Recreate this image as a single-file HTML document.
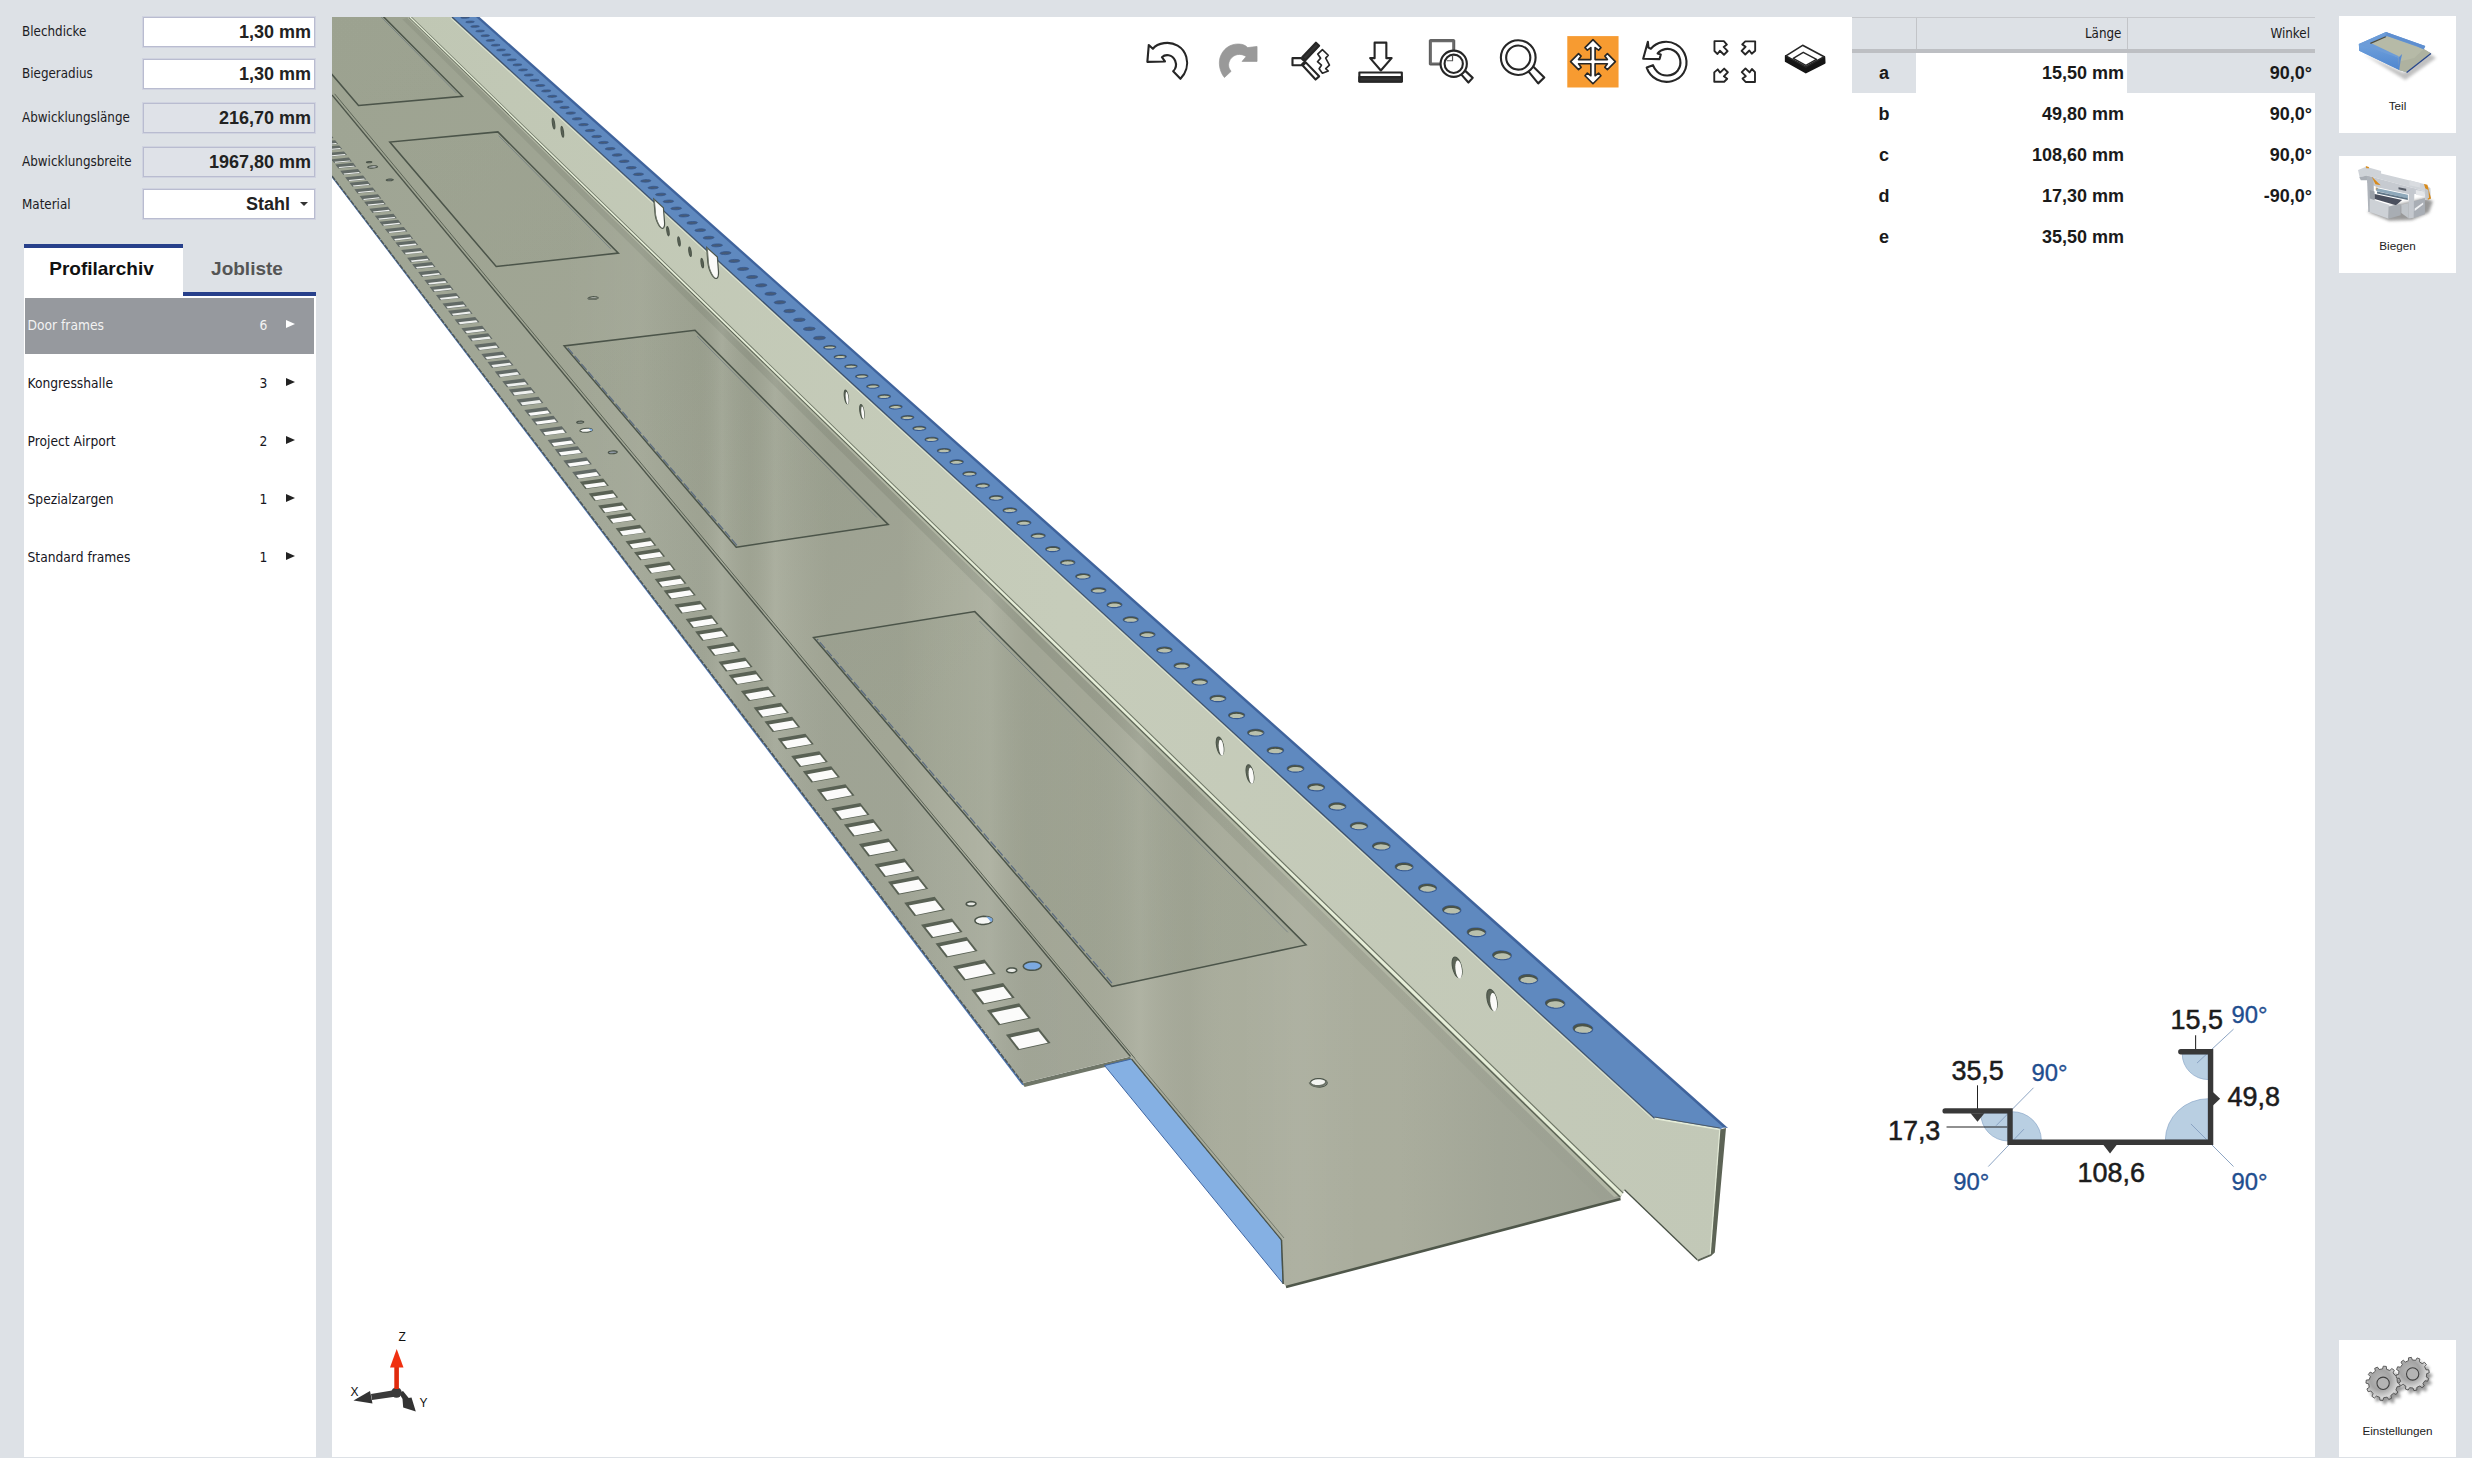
<!DOCTYPE html>
<html lang="de">
<head>
<meta charset="utf-8">
<title>Profil</title>
<style>
html,body{margin:0;padding:0;}
body{width:2472px;height:1458px;overflow:hidden;background:#dde1e6;font-family:"Liberation Sans",sans-serif;color:#1a1a1a;position:relative;}
.abs{position:absolute;}
.lbl{position:absolute;left:22px;font-family:"DejaVu Sans Condensed","Liberation Sans",sans-serif;font-size:13.3px;letter-spacing:0;color:#1c1c24;white-space:nowrap;}
.inp{position:absolute;left:143px;width:170px;height:28px;border:1px solid #b9bcd0;background:#fff;box-shadow:0 0 0 1px #d0d3e0;font-weight:bold;font-size:18px;text-align:right;line-height:28px;color:#222;}
.inp span{position:absolute;right:3px;top:0;}
.inp.ro{background:#dfe2e8;}
#view{position:absolute;left:332px;top:17px;width:1983px;height:1441px;background:#fff;overflow:hidden;}
#leftlist{position:absolute;left:23.5px;top:296px;width:292.5px;height:1162px;background:#fff;}
.tab{position:absolute;font-weight:bold;font-size:19px;text-align:center;white-space:nowrap;}
.row{position:absolute;left:0;width:291px;height:58px;font-family:"DejaVu Sans Condensed","Liberation Sans",sans-serif;font-size:13.7px;letter-spacing:0;color:#16161e;}
.row .n{position:absolute;left:4px;top:21px;}
.row .c{position:absolute;left:236px;top:21px;}
.row .a{position:absolute;left:262px;top:24px;width:0;height:0;border-left:9px solid #222;border-top:4.5px solid transparent;border-bottom:4.5px solid transparent;}
.row.sel{background:#96999e;color:#f2f2f2;left:1px;width:289px;top:2px;height:56px;}
.row.sel .a{border-left-color:#fff;}
.rbtn{position:absolute;left:2339px;width:117px;background:#fff;}
.rbtn .t{position:absolute;left:0;width:117px;text-align:center;font-size:11.7px;color:#222;}
table.tb{position:absolute;left:1852px;top:17px;border-collapse:collapse;table-layout:fixed;width:463px;}
.tb td{height:41px;padding:0;font-weight:bold;font-size:18px;text-align:right;color:#1a1a1a;}
.tb th{height:31px;background:#dde1e6;font-weight:normal;font-family:"DejaVu Sans Condensed","Liberation Sans",sans-serif;font-size:13.3px;text-align:right;letter-spacing:0;border-top:1px solid #c6c8cc;border-bottom:4px solid #bdbfc3;border-left:1px solid #c2c4c8;padding:0 5px 0 0;}
.tb td.k{text-align:center;}
.tb td.v{padding-right:3px;}
.tb td.w{padding-right:3px;}
.tb tr.s td.k,.tb tr.s td.w{background:linear-gradient(#dde1e6,#dde1e6) no-repeat;background-size:100% 40px;}
</style>
</head>
<body>
<!-- left form -->
<div class="lbl" style="top:24px">Blechdicke</div>
<div class="lbl" style="top:66px">Biegeradius</div>
<div class="lbl" style="top:110px">Abwicklungslänge</div>
<div class="lbl" style="top:154px">Abwicklungsbreite</div>
<div class="lbl" style="top:197px">Material</div>
<div class="inp" style="top:17px"><span>1,30 mm</span></div>
<div class="inp" style="top:59px"><span>1,30 mm</span></div>
<div class="inp ro" style="top:103px"><span>216,70 mm</span></div>
<div class="inp ro" style="top:147px"><span>1967,80 mm</span></div>
<div class="inp" style="top:189px"><span style="right:24px">Stahl</span><i style="position:absolute;right:6px;top:12px;width:0;height:0;border-top:4px solid #333;border-left:4px solid transparent;border-right:4px solid transparent"></i></div>
<!-- tabs -->
<div class="abs" style="left:24px;top:244px;width:159px;height:52px;background:#fff;border-top:4px solid #27408b;box-sizing:border-box"></div>
<div class="abs" style="left:183px;top:292px;width:133px;height:4px;background:#27408b"></div>
<div class="tab" style="left:24px;top:258px;width:155px;color:#111">Profilarchiv</div>
<div class="tab" style="left:183px;top:258px;width:128px;color:#555">Jobliste</div>
<div id="leftlist">
<div class="row sel"><span class="n" style="top:19px;left:3px">Door frames</span><span class="c" style="top:19px;left:235px">6</span><i class="a" style="top:22px;left:261px"></i></div>
<div class="row" style="top:58px"><span class="n">Kongresshalle</span><span class="c">3</span><i class="a"></i></div>
<div class="row" style="top:116px"><span class="n">Project Airport</span><span class="c">2</span><i class="a"></i></div>
<div class="row" style="top:174px"><span class="n">Spezialzargen</span><span class="c">1</span><i class="a"></i></div>
<div class="row" style="top:232px"><span class="n">Standard frames</span><span class="c">1</span><i class="a"></i></div>
</div>
<!-- viewport -->
<div id="view">
<svg width="1983" height="1441" viewBox="332 17 1983 1441" style="position:absolute;left:0;top:0"><defs>
<linearGradient id="gc" gradientUnits="userSpaceOnUse" x1="332" y1="17" x2="1450" y2="1240"><stop offset="0" stop-color="#9da391"/><stop offset="0.3" stop-color="#a1a695"/><stop offset="0.55" stop-color="#a9ad9c"/><stop offset="1" stop-color="#aaad9d"/></linearGradient>
<linearGradient id="gdark" gradientUnits="userSpaceOnUse" x1="1400" y1="0" x2="1640" y2="0"><stop offset="0" stop-color="#90968a" stop-opacity="0"/><stop offset="0.4" stop-color="#90968a" stop-opacity="0.3"/><stop offset="1" stop-color="#8c9286" stop-opacity="0.5"/></linearGradient>
<linearGradient id="gband" gradientUnits="userSpaceOnUse" x1="400" y1="17" x2="1620" y2="1195"><stop offset="0" stop-color="#868c7c" stop-opacity="0.4"/><stop offset="0.6" stop-color="#868c7c" stop-opacity="0.4"/><stop offset="1" stop-color="#868c7c" stop-opacity="0.05"/></linearGradient>
<linearGradient id="grect" gradientUnits="userSpaceOnUse" x1="332" y1="17" x2="1300" y2="1000"><stop offset="0" stop-color="#8d9482" stop-opacity="0.05"/><stop offset="0.35" stop-color="#8d9482" stop-opacity="0.18"/><stop offset="1" stop-color="#8d9482" stop-opacity="0.32"/></linearGradient>
<linearGradient id="ge" gradientUnits="userSpaceOnUse" x1="332" y1="0" x2="1130" y2="0"><stop offset="0" stop-color="#9fa594"/><stop offset="0.5" stop-color="#a3a898"/><stop offset="1" stop-color="#a6aa9b"/></linearGradient>
<linearGradient id="gb" gradientUnits="userSpaceOnUse" x1="400" y1="0" x2="1730" y2="0"><stop offset="0" stop-color="#c0c7b4"/><stop offset="0.5" stop-color="#c6ccba"/><stop offset="1" stop-color="#c2c8b7"/></linearGradient>
<clipPath id="cpc"><polygon points="332.0,17.0 410.0,17.0 1621.5,1195.0 1620.0,1199.0 1290.0,1286.5 1286.0,1286.0 1283.0,1283.0 1281.5,1240.0 332.0,95.0"/></clipPath>
<linearGradient id="gv" gradientUnits="userSpaceOnUse" x1="560" y1="0" x2="1360" y2="0"><stop offset="0.0000" stop-color="#fff" stop-opacity="0"/><stop offset="0.1000" stop-color="#fff" stop-opacity="0.07"/><stop offset="0.1750" stop-color="#000" stop-opacity="0.05"/><stop offset="0.2025" stop-color="#fff" stop-opacity="0.11"/><stop offset="0.2375" stop-color="#000" stop-opacity="0.06"/><stop offset="0.2687" stop-color="#fff" stop-opacity="0.11"/><stop offset="0.3375" stop-color="#000" stop-opacity="0.07"/><stop offset="0.4250" stop-color="#000" stop-opacity="0.07"/><stop offset="0.5000" stop-color="#fff" stop-opacity="0.05"/><stop offset="0.5375" stop-color="#fff" stop-opacity="0.13"/><stop offset="0.5875" stop-color="#000" stop-opacity="0.07"/><stop offset="0.6625" stop-color="#000" stop-opacity="0.05"/><stop offset="0.7250" stop-color="#fff" stop-opacity="0.11"/><stop offset="0.7875" stop-color="#000" stop-opacity="0.05"/><stop offset="0.8500" stop-color="#fff" stop-opacity="0"/><stop offset="0.9250" stop-color="#fff" stop-opacity="0.09"/><stop offset="1.0000" stop-color="#fff" stop-opacity="0"/></linearGradient>
<clipPath id="cpe"><polygon points="332.0,95.0 1130.5,1056.5 1023.0,1083.0 332.0,176.0"/></clipPath>
</defs>
<polygon points="331.0,176.5 1022.0,1084.8 1025.0,1086.0 1023.0,1083.0 332.0,175.0" fill="#4d74ad"/>
<polygon points="1023.0,1083.0 1130.5,1056.5 1131.5,1060.5 1024.5,1087.0" fill="#6f7668"/>
<polygon points="332.0,95.0 1130.5,1056.5 1023.0,1083.0 332.0,176.0" fill="url(#ge)"/>
<rect clip-path="url(#cpe)" x="560" y="17" width="800" height="1300" fill="url(#gv)" opacity="0.45"/>
<polygon points="1104.5,1065.5 1131.5,1059.0 1281.5,1240.0 1283.0,1283.5" fill="#85b0e3" stroke="#3f66a3" stroke-width="1"/>
<polygon points="332.0,17.0 410.0,17.0 1621.5,1195.0 1620.0,1199.0 1290.0,1286.5 1286.0,1286.0 1283.0,1283.0 1281.5,1240.0 332.0,95.0" fill="url(#gc)"/>
<polygon points="410.0,17.0 1621.5,1195.0 1601.4,1200.5 402.2,19.3" fill="url(#gband)"/>
<polygon clip-path="url(#cpc)" points="1400.0,900.0 1640.0,900.0 1640.0,1300.0 1400.0,1300.0" fill="url(#gdark)"/>
<rect clip-path="url(#cpc)" x="560" y="17" width="800" height="1300" fill="url(#gv)" opacity="0.6"/>
<polygon points="410.0,17.0 1621.5,1195.0 1614.1,1197.0 407.3,17.8" fill="#b6bca9" opacity="0.8"/>
<polygon points="410.0,17.0 452.0,17.0 1654.6,1118.4 1719.8,1129.4 1710.2,1254.2 1697.2,1259.7 1624.5,1189.7 1621.5,1195.0" fill="url(#gb)"/>
<polygon points="1719.8,1129.4 1726.0,1128.0 1714.8,1252.5 1711.0,1256.0 1698.0,1261.5 1697.2,1259.7 1710.2,1254.2" fill="#5d6456"/>
<polygon points="452.0,17.0 477.0,17.0 1724.6,1127.0 1719.8,1129.4 1654.6,1118.4" fill="#5f89bf"/>
<polygon points="476.0,17.0 479.5,17.0 1728.0,1128.0 1723.5,1127.5" fill="#3f639c"/>
<polygon points="409.5,17.5 409.0,18.1 1619.3,1197.3 1620.3,1196.2" fill="#5b6354"/>
<polygon points="410.4,16.6 409.6,17.4 1620.6,1195.9 1622.8,1193.6" fill="#e6eed8"/>
<polygon points="410.9,16.0 410.5,16.5 1622.9,1193.5 1623.7,1192.7" fill="#6b7363"/>
<line x1="332.0" y1="95.0" x2="1130.5" y2="1056.5" stroke="#4c5449" stroke-width="1.4" />
<line x1="334.6" y1="93.8" x2="1135.0" y2="1058.5" stroke="#5d6558" stroke-width="1.0" />
<line x1="1131.5" y1="1059.0" x2="1281.5" y2="1240.0" stroke="#4c5449" stroke-width="1.2" />
<line x1="1134.5" y1="1058.5" x2="1284.0" y2="1238.0" stroke="#6d7467" stroke-width="0.9" />
<line x1="452.0" y1="17.0" x2="1654.6" y2="1118.4" stroke="#3b4f6b" stroke-width="1.2" />
<line x1="450.8" y1="18.1" x2="1653.4" y2="1119.5" stroke="#e0e7d3" stroke-width="1.0" />
<line x1="1654.6" y1="1118.4" x2="1719.8" y2="1129.4" stroke="#e4ebd6" stroke-width="1.6" />
<line x1="1654.6" y1="1117.0" x2="1719.8" y2="1128.0" stroke="#4d5a66" stroke-width="1.0" />
<line x1="1286.0" y1="1287.0" x2="1620.5" y2="1199.0" stroke="#4f574a" stroke-width="2.6" />
<line x1="1281.5" y1="1240.0" x2="1283.2" y2="1284.0" stroke="#4a5247" stroke-width="1.5" />
<line x1="1697.2" y1="1259.7" x2="1624.5" y2="1189.7" stroke="#4a5247" stroke-width="1.3" />
<line x1="1719.8" y1="1129.4" x2="1710.2" y2="1254.2" stroke="#e2e9d6" stroke-width="1.2" />
<line x1="332.0" y1="176.0" x2="1023.0" y2="1083.0" stroke="#4d5658" stroke-width="1.4" stroke-dasharray="5 1.2"/>
<polygon points="1111.8,986.5 1306.1,944.9 974.8,611.6 813.5,637.6" fill="url(#grect)" stroke="#4b5449" stroke-width="1.5" stroke-linejoin="miter"/>
<line x1="1111.9" y1="983.1" x2="817.2" y2="639.1" stroke="#45597a" stroke-width="1.3" stroke-dasharray="8 2.5" opacity="0.7"/>
<line x1="1287.8" y1="932.3" x2="979.4" y2="621.0" stroke="#5a6a7a" stroke-width="0.8" opacity="0.6"/>
<polygon points="736.2,547.2 888.3,524.6 695.0,330.2 564.1,345.9" fill="url(#grect)" stroke="#4b5449" stroke-width="1.5" stroke-linejoin="miter"/>
<line x1="736.9" y1="545.3" x2="566.8" y2="346.8" stroke="#45597a" stroke-width="1.3" stroke-dasharray="8 2.5" opacity="0.7"/>
<line x1="877.0" y1="517.6" x2="697.1" y2="336.0" stroke="#5a6a7a" stroke-width="0.8" opacity="0.6"/>
<polygon points="496.2,266.5 618.4,253.1 497.9,131.9 389.8,142.0" fill="url(#grect)" stroke="#4b5449" stroke-width="1.5" stroke-linejoin="miter"/>
<line x1="610.8" y1="248.9" x2="498.7" y2="135.7" stroke="#5a6a7a" stroke-width="0.8" opacity="0.6"/>
<polygon points="358.5,105.5 462.5,96.3 375.6,8.8 282.0,16.0" fill="url(#grect)" stroke="#4b5449" stroke-width="1.5" stroke-linejoin="miter"/>
<line x1="456.7" y1="93.3" x2="375.8" y2="11.6" stroke="#5a6a7a" stroke-width="0.8" opacity="0.6"/>
<polygon points="1315.2,1078.9 1317.7,1078.6 1320.3,1078.7 1322.8,1079.1 1324.8,1080.0 1326.3,1081.1 1327.1,1082.4 1327.0,1083.7 1326.1,1084.9 1324.5,1086.0 1322.4,1086.7 1319.9,1087.1 1317.2,1087.0 1314.8,1086.5 1312.7,1085.7 1311.2,1084.6 1310.5,1083.3 1310.6,1082.0 1311.4,1080.7 1313.0,1079.7" fill="#f4f5f2" stroke="#4b5449" stroke-width="1.2"/>
<polyline points="1325.7,1080.6 1326.1,1081.7 1325.8,1082.9 1324.9,1084.0 1323.5,1084.9 1321.6,1085.5 1319.5,1085.9 1317.2,1086.0 1314.9,1085.7 1312.9,1085.1 1311.2,1084.3 1310.1,1083.3 1309.5,1082.2" fill="none" stroke="#6a7166" stroke-width="2"/>
<polygon points="592.1,296.9 593.6,296.7 595.0,296.8 596.3,296.9 597.3,297.2 597.9,297.5 598.0,297.9 597.6,298.4 596.9,298.8 595.7,299.1 594.3,299.3 592.8,299.4 591.4,299.4 590.1,299.2 589.1,299.0 588.5,298.6 588.4,298.2 588.8,297.8 589.6,297.4 590.7,297.1" fill="#f4f5f2" stroke="#4b5449" stroke-width="1.2"/>
<polyline points="597.7,297.4 597.6,297.8 597.2,298.1 596.4,298.4 595.4,298.7 594.2,298.9 592.9,299.0 591.6,299.1 590.4,299.0 589.4,298.8 588.6,298.5 588.2,298.2 588.1,297.9" fill="none" stroke="#6a7166" stroke-width="2"/>
<polygon points="1017.9,1050.3 1050.6,1043.1 1038.4,1027.7 1005.9,1034.7" fill="#596154"/>
<polygon points="1019.4,1049.0 1047.7,1042.7 1038.6,1031.3 1010.5,1037.4" fill="#fbfbfa"/>
<polygon points="998.6,1025.3 1031.0,1018.3 1019.1,1003.3 986.9,1010.2" fill="#596154"/>
<polygon points="1000.2,1024.0 1028.1,1017.9 1019.4,1006.9 991.6,1012.8" fill="#fbfbfa"/>
<polygon points="982.6,1004.6 1014.7,997.8 1003.1,983.1 971.2,989.8" fill="#596154"/>
<polygon points="984.2,1003.3 1011.9,997.4 1003.4,986.7 975.9,992.5" fill="#fbfbfa"/>
<polygon points="964.1,980.5 995.8,973.9 984.5,959.6 953.0,966.2" fill="#596154"/>
<polygon points="965.6,979.3 993.0,973.6 984.9,963.3 957.6,968.9" fill="#fbfbfa"/>
<polygon points="946.3,957.4 977.6,951.0 966.6,937.1 935.5,943.5" fill="#596154"/>
<polygon points="947.8,956.2 974.9,950.7 967.1,940.8 940.1,946.3" fill="#fbfbfa"/>
<polygon points="931.6,938.3 962.6,932.0 951.9,918.5 921.0,924.7" fill="#596154"/>
<polygon points="933.1,937.1 959.9,931.7 952.3,922.1 925.6,927.5" fill="#fbfbfa"/>
<polygon points="914.4,916.1 945.1,909.9 934.7,896.8 904.2,902.8" fill="#596154"/>
<polygon points="916.0,914.9 942.4,909.6 935.1,900.4 908.8,905.6" fill="#fbfbfa"/>
<polygon points="898.0,894.7 928.3,888.7 918.1,875.9 888.0,881.8" fill="#596154"/>
<polygon points="899.5,893.6 925.7,888.4 918.6,879.5 892.6,884.6" fill="#fbfbfa"/>
<polygon points="884.3,877.0 914.4,871.2 904.4,858.6 874.5,864.3" fill="#596154"/>
<polygon points="885.8,875.9 911.8,870.9 904.9,862.2 879.1,867.2" fill="#fbfbfa"/>
<polygon points="868.4,856.4 898.1,850.7 888.4,838.4 858.9,844.0" fill="#596154"/>
<polygon points="869.9,855.3 895.6,850.4 889.0,842.1 863.5,846.9" fill="#fbfbfa"/>
<polygon points="853.1,836.5 882.5,831.0 873.1,819.1 843.9,824.5" fill="#596154"/>
<polygon points="854.6,835.5 880.0,830.7 873.7,822.7 848.4,827.4" fill="#fbfbfa"/>
<polygon points="840.4,820.1 869.6,814.7 860.3,803.0 831.4,808.3" fill="#596154"/>
<polygon points="841.9,819.0 867.1,814.4 860.9,806.6 835.9,811.2" fill="#fbfbfa"/>
<polygon points="825.7,800.9 854.5,795.6 845.5,784.2 816.8,789.4" fill="#596154"/>
<polygon points="827.1,799.9 852.0,795.3 846.1,787.8 821.3,792.3" fill="#fbfbfa"/>
<polygon points="811.4,782.4 840.0,777.3 831.2,766.2 802.8,771.2" fill="#596154"/>
<polygon points="812.9,781.4 837.6,777.0 831.8,769.8 807.3,774.2" fill="#fbfbfa"/>
<polygon points="799.6,767.1 827.9,762.1 819.3,751.2 791.2,756.1" fill="#596154"/>
<polygon points="801.1,766.1 825.5,761.8 820.0,754.8 795.6,759.1" fill="#fbfbfa"/>
<polygon points="785.8,749.2 813.8,744.3 805.4,733.7 777.6,738.5" fill="#596154"/>
<polygon points="787.3,748.3 811.5,744.0 806.1,737.3 782.0,741.5" fill="#fbfbfa"/>
<polygon points="772.6,732.0 800.3,727.2 792.1,716.8 764.5,721.5" fill="#596154"/>
<polygon points="774.0,731.1 797.9,726.9 792.8,720.4 768.9,724.5" fill="#fbfbfa"/>
<polygon points="761.5,717.7 789.0,713.0 780.9,702.8 753.6,707.4" fill="#596154"/>
<polygon points="763.0,716.8 786.7,712.7 781.7,706.4 758.1,710.4" fill="#fbfbfa"/>
<polygon points="748.7,700.9 775.9,696.4 768.0,686.4 740.9,690.9" fill="#596154"/>
<polygon points="750.1,700.1 773.6,696.1 768.7,690.0 745.3,693.9" fill="#fbfbfa"/>
<polygon points="736.2,684.8 763.2,680.4 755.5,670.6 728.7,675.0" fill="#596154"/>
<polygon points="737.7,684.0 760.9,680.1 756.3,674.2 733.1,678.1" fill="#fbfbfa"/>
<polygon points="725.9,671.4 752.6,667.0 745.1,657.5 718.5,661.8" fill="#596154"/>
<polygon points="727.3,670.6 750.4,666.8 745.9,661.1 722.9,664.8" fill="#fbfbfa"/>
<polygon points="713.9,655.8 740.3,651.5 732.9,642.2 706.6,646.4" fill="#596154"/>
<polygon points="715.3,655.0 738.1,651.3 733.7,645.8 711.0,649.4" fill="#fbfbfa"/>
<polygon points="702.2,640.7 728.4,636.5 721.2,627.4 695.1,631.5" fill="#596154"/>
<polygon points="703.6,639.9 726.2,636.3 722.0,630.9 699.5,634.5" fill="#fbfbfa"/>
<polygon points="692.5,628.1 718.5,624.0 711.4,615.1 685.6,619.1" fill="#596154"/>
<polygon points="693.9,627.3 716.4,623.8 712.3,618.6 689.9,622.1" fill="#fbfbfa"/>
<polygon points="681.2,613.4 707.0,609.4 700.0,600.7 674.4,604.6" fill="#596154"/>
<polygon points="682.6,612.7 704.8,609.2 700.9,604.2 678.7,607.6" fill="#fbfbfa"/>
<polygon points="670.3,599.2 695.8,595.3 689.0,586.8 663.6,590.6" fill="#596154"/>
<polygon points="671.7,598.5 693.7,595.1 689.9,590.3 667.9,593.6" fill="#fbfbfa"/>
<polygon points="661.2,587.4 686.5,583.6 679.8,575.2 654.7,579.0" fill="#596154"/>
<polygon points="662.6,586.7 684.4,583.4 680.7,578.7 658.9,582.0" fill="#fbfbfa"/>
<polygon points="650.5,573.6 675.6,569.9 669.1,561.6 644.2,565.3" fill="#596154"/>
<polygon points="651.9,572.9 673.5,569.7 670.0,565.1 648.4,568.4" fill="#fbfbfa"/>
<polygon points="640.3,560.3 665.1,556.6 658.7,548.5 634.0,552.2" fill="#596154"/>
<polygon points="641.6,559.6 663.1,556.4 659.6,552.0 638.2,555.2" fill="#fbfbfa"/>
<polygon points="631.7,549.1 656.3,545.5 650.0,537.6 625.5,541.2" fill="#596154"/>
<polygon points="633.0,548.5 654.3,545.3 651.0,541.1 629.7,544.2" fill="#fbfbfa"/>
<polygon points="621.7,536.1 646.1,532.6 639.9,524.8 615.6,528.3" fill="#596154"/>
<polygon points="623.0,535.5 644.1,532.4 640.8,528.3 619.8,531.3" fill="#fbfbfa"/>
<polygon points="612.0,523.6 636.2,520.1 630.1,512.5 606.1,515.9" fill="#596154"/>
<polygon points="613.3,522.9 634.2,519.9 631.1,516.0 610.2,518.9" fill="#fbfbfa"/>
<polygon points="603.9,513.1 627.9,509.7 622.0,502.2 598.1,505.5" fill="#596154"/>
<polygon points="605.2,512.4 625.9,509.5 622.9,505.6 602.2,508.6" fill="#fbfbfa"/>
<polygon points="594.4,500.8 618.2,497.5 612.4,490.1 588.7,493.4" fill="#596154"/>
<polygon points="595.7,500.2 616.3,497.3 613.4,493.6 592.9,496.4" fill="#fbfbfa"/>
<polygon points="585.3,488.9 608.9,485.7 603.2,478.5 579.7,481.7" fill="#596154"/>
<polygon points="586.6,488.3 607.0,485.5 604.1,481.9 583.8,484.7" fill="#fbfbfa"/>
<polygon points="577.6,479.0 601.1,475.8 595.5,468.7 572.2,471.9" fill="#626a66"/>
<polygon points="578.9,478.4 599.2,475.6 596.4,472.1 576.2,474.9" fill="#fbfbfa"/>
<polygon points="568.7,467.4 591.9,464.3 586.4,457.3 563.3,460.4" fill="#626a66"/>
<polygon points="570.0,466.8 590.0,464.1 587.4,460.7 567.4,463.4" fill="#fbfbfa"/>
<polygon points="560.0,456.2 583.1,453.1 577.7,446.3 554.8,449.3" fill="#626a66"/>
<polygon points="561.3,455.6 581.2,452.9 578.6,449.7 558.8,452.3" fill="#fbfbfa"/>
<polygon points="552.8,446.8 575.7,443.8 570.4,437.1 547.6,440.0" fill="#626a66"/>
<polygon points="554.1,446.2 573.8,443.6 571.3,440.4 551.6,443.0" fill="#fbfbfa"/>
<polygon points="544.3,435.8 567.0,432.8 561.8,426.3 539.3,429.2" fill="#626a66"/>
<polygon points="545.6,435.2 565.2,432.7 562.8,429.6 543.3,432.2" fill="#fbfbfa"/>
<polygon points="536.2,425.2 558.6,422.2 553.5,415.8 531.2,418.7" fill="#626a66"/>
<polygon points="537.4,424.6 556.8,422.1 554.5,419.2 535.1,421.7" fill="#fbfbfa"/>
<polygon points="529.3,416.3 551.6,413.4 546.6,407.1 524.4,409.9" fill="#626a66"/>
<polygon points="530.6,415.7 549.8,413.2 547.6,410.4 528.3,412.9" fill="#fbfbfa"/>
<polygon points="521.3,405.9 543.4,403.0 538.5,396.8 516.4,399.6" fill="#626a66"/>
<polygon points="522.5,405.3 541.6,402.9 539.5,400.1 520.4,402.6" fill="#eef0ee"/>
<polygon points="513.5,395.8 535.5,393.0 530.6,386.9 508.8,389.6" fill="#626a66"/>
<polygon points="514.7,395.2 533.7,392.9 531.6,390.2 512.7,392.6" fill="#eef0ee"/>
<polygon points="507.0,387.3 528.8,384.6 524.0,378.6 502.3,381.3" fill="#626a66"/>
<polygon points="508.2,386.8 527.1,384.5 525.0,381.9 506.2,384.2" fill="#eef0ee"/>
<polygon points="499.4,377.4 521.0,374.8 516.3,368.8 494.8,371.5" fill="#626a66"/>
<polygon points="500.6,376.9 519.3,374.6 517.3,372.1 498.7,374.4" fill="#eef0ee"/>
<polygon points="492.0,367.9 513.5,365.2 508.8,359.4 487.5,362.0" fill="#626a66"/>
<polygon points="493.2,367.4 511.7,365.1 509.8,362.7 491.4,364.9" fill="#eef0ee"/>
<polygon points="485.8,359.8 507.1,357.3 502.6,351.5 481.4,354.1" fill="#626a66"/>
<polygon points="487.0,359.3 505.4,357.1 503.6,354.8 485.2,357.0" fill="#eef0ee"/>
<polygon points="478.6,350.4 499.7,347.9 495.3,342.3 474.2,344.8" fill="#626a66"/>
<polygon points="479.8,349.9 498.0,347.8 496.3,345.5 478.0,347.7" fill="#eef0ee"/>
<polygon points="471.5,341.3 492.5,338.8 488.1,333.3 467.3,335.8" fill="#626a66"/>
<polygon points="472.7,340.8 490.9,338.7 489.2,336.5 471.1,338.7" fill="#eef0ee"/>
<polygon points="465.7,333.7 486.5,331.2 482.2,325.8 461.4,328.2" fill="#626a66"/>
<polygon points="466.9,333.2 484.9,331.1 483.2,329.0 465.2,331.1" fill="#eef0ee"/>
<polygon points="458.8,324.7 479.5,322.3 475.2,317.0 454.6,319.4" fill="#626a66"/>
<polygon points="460.0,324.3 477.8,322.2 476.2,320.2 458.4,322.3" fill="#eef0ee"/>
<polygon points="452.1,316.1 472.6,313.7 468.4,308.4 448.0,310.8" fill="#626a66"/>
<polygon points="453.3,315.6 471.0,313.6 469.5,311.6 451.8,313.7" fill="#eef0ee"/>
<polygon points="446.5,308.8 466.9,306.5 462.8,301.3 442.5,303.6" fill="#626a66"/>
<polygon points="447.7,308.3 465.3,306.3 463.8,304.5 446.2,306.5" fill="#eef0ee"/>
<polygon points="439.9,300.3 460.2,298.0 456.1,292.9 436.0,295.1" fill="#626a66"/>
<polygon points="441.1,299.8 458.6,297.9 457.1,296.0 439.7,298.0" fill="#eef0ee"/>
<polygon points="433.5,292.0 453.6,289.7 449.7,284.7 429.6,286.9" fill="#626a66"/>
<polygon points="434.7,291.6 452.1,289.6 450.7,287.9 433.3,289.8" fill="#eef0ee"/>
<polygon points="428.2,285.1 448.2,282.8 444.2,277.9 424.4,280.1" fill="#626a66"/>
<polygon points="429.4,284.6 446.6,282.7 445.3,281.0 428.0,282.9" fill="#eef0ee"/>
<polygon points="421.9,276.9 441.8,274.7 437.9,269.9 418.2,272.0" fill="#626a66"/>
<polygon points="423.1,276.5 440.2,274.6 438.9,273.0 421.8,274.9" fill="#eef0ee"/>
<polygon points="415.8,269.0 435.5,266.9 431.7,262.1 412.1,264.2" fill="#626a66"/>
<polygon points="417.0,268.6 434.0,266.8 432.7,265.2 415.8,267.0" fill="#eef0ee"/>
<polygon points="410.7,262.4 430.3,260.3 426.6,255.6 407.1,257.7" fill="#626a66"/>
<polygon points="411.9,262.0 428.8,260.2 427.6,258.7 410.7,260.5" fill="#eef0ee"/>
<polygon points="404.8,254.6 424.2,252.6 420.5,247.9 401.1,250.0" fill="#626a66"/>
<polygon points="405.9,254.2 422.7,252.4 421.5,251.0 404.8,252.8" fill="#eef0ee"/>
<polygon points="398.9,247.1 418.2,245.1 414.6,240.5 395.4,242.5" fill="#626a66"/>
<polygon points="400.1,246.7 416.7,244.9 415.6,243.5 399.0,245.3" fill="#eef0ee"/>
<polygon points="394.1,240.8 413.2,238.8 409.6,234.2 390.6,236.2" fill="#626a66"/>
<polygon points="395.2,240.4 411.7,238.6 410.7,237.3 394.1,239.0" fill="#eef0ee"/>
<polygon points="388.3,233.3 407.4,231.4 403.8,226.9 384.9,228.9" fill="#626a66"/>
<polygon points="389.5,233.0 405.9,231.3 404.9,230.0 388.5,231.7" fill="#eef0ee"/>
<polygon points="382.8,226.1 401.7,224.2 398.2,219.8 379.4,221.7" fill="#626a66"/>
<polygon points="383.9,225.7 400.2,224.1 399.2,222.8 382.9,224.5" fill="#eef0ee"/>
<polygon points="378.1,220.1 396.9,218.2 393.5,213.8 374.8,215.7" fill="#626a66"/>
<polygon points="379.2,219.7 395.4,218.0 394.5,216.9 378.3,218.5" fill="#eef0ee"/>
<polygon points="372.6,213.0 391.3,211.1 387.9,206.8 369.3,208.7" fill="#626a66"/>
<polygon points="373.7,212.6 389.8,211.0 388.9,209.8 372.9,211.5" fill="#eef0ee"/>
<polygon points="367.3,206.1 385.8,204.2 382.5,200.0 364.1,201.8" fill="#626a66"/>
<polygon points="368.4,205.7 384.4,204.1 383.5,203.0 367.6,204.6" fill="#eef0ee"/>
<polygon points="362.9,200.3 381.3,198.4 378.0,194.3 359.6,196.1" fill="#626a66"/>
<polygon points="363.9,199.9 379.8,198.3 379.0,197.3 363.1,198.9" fill="#eef0ee"/>
<polygon points="357.6,193.5 375.9,191.6 372.7,187.6 354.4,189.3" fill="#626a66"/>
<polygon points="358.7,193.1 374.5,191.5 373.7,190.5 357.9,192.1" fill="#eef0ee"/>
<polygon points="352.5,186.8 370.7,185.1 367.5,181.0 349.4,182.8" fill="#626a66"/>
<polygon points="353.6,186.5 369.3,185.0 368.5,184.0 352.8,185.5" fill="#eef0ee"/>
<polygon points="348.2,181.3 366.3,179.5 363.1,175.5 345.1,177.3" fill="#626a66"/>
<polygon points="349.3,180.9 364.9,179.4 364.1,178.5 348.6,180.0" fill="#eef0ee"/>
<polygon points="343.2,174.7 361.1,173.0 358.0,169.1 340.2,170.8" fill="#626a66"/>
<polygon points="344.3,174.4 359.7,172.9 359.0,172.0 343.5,173.5" fill="#eef0ee"/>
<polygon points="338.3,168.4 356.1,166.7 353.1,162.8 335.3,164.5" fill="#626a66"/>
<polygon points="339.4,168.1 354.7,166.6 354.0,165.7 338.6,167.1" fill="#eef0ee"/>
<polygon points="334.2,163.1 351.9,161.4 348.9,157.6 331.2,159.2" fill="#626a66"/>
<polygon points="335.2,162.7 350.6,161.3 349.8,160.4 334.5,161.8" fill="#eef0ee"/>
<polygon points="329.4,156.8 347.0,155.1 344.0,151.4 326.5,153.0" fill="#626a66"/>
<polygon points="330.4,156.5 345.6,155.1 344.9,154.1 329.7,155.6" fill="#eef0ee"/>
<polygon points="324.7,150.7 342.2,149.1 339.2,145.4 321.8,147.0" fill="#626a66"/>
<polygon points="325.7,150.4 340.8,149.0 340.1,148.1 325.0,149.5" fill="#eef0ee"/>
<polygon points="320.7,145.6 338.1,144.0 335.2,140.3 317.9,141.9" fill="#626a66"/>
<polygon points="321.8,145.3 336.8,143.9 336.1,143.0 321.1,144.4" fill="#eef0ee"/>
<polygon points="316.1,139.6 333.4,138.0 330.5,134.4 313.3,135.9" fill="#626a66"/>
<polygon points="317.1,139.3 332.0,137.9 331.4,137.0 316.4,138.4" fill="#eef0ee"/>
<polygon points="1029.1,962.0 1031.9,961.7 1034.7,961.8 1037.3,962.2 1039.4,963.1 1040.8,964.2 1041.4,965.5 1041.1,966.8 1039.9,968.1 1038.0,969.2 1035.6,969.9 1032.8,970.3 1030.0,970.2 1027.4,969.7 1025.3,968.9 1023.9,967.7 1023.3,966.4 1023.6,965.1 1024.8,963.8 1026.7,962.8" fill="#7ca9e0" stroke="#4b5449" stroke-width="1.5"/>
<polygon points="1009.9,968.1 1011.5,967.9 1013.0,967.9 1014.5,968.2 1015.6,968.7 1016.4,969.3 1016.7,970.0 1016.6,970.8 1015.9,971.5 1014.8,972.1 1013.5,972.5 1011.9,972.7 1010.3,972.6 1008.9,972.4 1007.7,971.9 1007.0,971.3 1006.6,970.6 1006.8,969.8 1007.5,969.1 1008.6,968.5" fill="#e9ebe6" stroke="#4b5449" stroke-width="1.5"/>
<polygon points="980.7,916.7 983.4,916.3 986.2,916.4 988.6,916.8 990.7,917.6 992.0,918.7 992.5,919.9 992.2,921.2 991.0,922.4 989.2,923.4 986.7,924.1 984.0,924.4 981.3,924.4 978.8,923.9 976.7,923.1 975.4,922.1 974.9,920.8 975.2,919.5 976.4,918.4 978.3,917.4" fill="#f6f7f5" stroke="#4b5449" stroke-width="1.5"/>
<polygon points="969.5,901.8 971.0,901.6 972.5,901.7 973.8,901.9 974.9,902.3 975.7,902.9 976.0,903.6 975.8,904.3 975.1,904.9 974.1,905.5 972.7,905.9 971.3,906.0 969.7,906.0 968.4,905.8 967.3,905.3 966.5,904.7 966.2,904.1 966.4,903.4 967.1,902.7 968.1,902.2" fill="#e9ebe6" stroke="#4b5449" stroke-width="1.5"/>
<polygon points="986.2,916.6 987.8,916.8 989.2,917.0 990.4,917.5 991.4,918.0 992.1,918.6 992.5,919.3 992.6,920.0 992.4,920.7 991.8,921.4 991.0,922.1" fill="#7ca9e0"/>
<polygon points="611.7,451.0 613.1,450.9 614.4,450.9 615.6,451.1 616.5,451.3 617.1,451.7 617.2,452.2 616.9,452.6 616.2,453.0 615.1,453.4 613.8,453.6 612.4,453.8 611.1,453.7 609.8,453.6 608.9,453.3 608.4,452.9 608.3,452.5 608.6,452.0 609.3,451.6 610.4,451.2" fill="#8e98a4" stroke="#4b5449" stroke-width="1.1"/>
<polygon points="584.7,428.5 586.7,428.3 588.6,428.3 590.3,428.6 591.6,428.9 592.3,429.5 592.5,430.1 592.0,430.7 591.0,431.3 589.5,431.8 587.7,432.1 585.7,432.2 583.8,432.2 582.1,432.0 580.9,431.6 580.1,431.1 580.0,430.5 580.4,429.8 581.4,429.3 582.9,428.8" fill="#f6f7f5" stroke="#4b5449" stroke-width="1.1"/>
<polygon points="579.4,421.2 580.5,421.1 581.5,421.1 582.4,421.2 583.1,421.4 583.6,421.7 583.7,422.1 583.4,422.4 582.8,422.7 582.0,423.0 581.0,423.2 579.9,423.2 578.9,423.2 577.9,423.1 577.2,422.9 576.8,422.6 576.7,422.3 577.0,421.9 577.6,421.6 578.4,421.4" fill="#8e9690" stroke="#4b5449" stroke-width="1.1"/>
<polygon points="588.6,428.5 589.7,428.5 590.6,428.7 591.4,428.9 592.0,429.1 592.4,429.4 592.6,429.8 592.5,430.1 592.2,430.5 591.7,430.8 591.0,431.1" fill="#7ca9e0"/>
<polygon points="389.1,179.1 390.2,179.1 391.3,179.1 392.2,179.2 392.8,179.4 393.2,179.6 393.2,179.8 392.9,180.1 392.3,180.3 391.4,180.6 390.4,180.7 389.3,180.8 388.3,180.7 387.4,180.6 386.7,180.5 386.3,180.2 386.3,180.0 386.6,179.7 387.2,179.5 388.1,179.3" fill="#8e98a4" stroke="#4b5449" stroke-width="1.1"/>
<polygon points="371.8,165.9 373.3,165.8 374.8,165.8 376.0,165.9 376.9,166.2 377.4,166.5 377.5,166.8 377.0,167.2 376.2,167.5 374.9,167.8 373.5,168.0 372.0,168.1 370.5,168.1 369.2,167.9 368.3,167.7 367.8,167.4 367.8,167.0 368.2,166.7 369.1,166.3 370.3,166.1" fill="#c9cdd0" stroke="#4b5449" stroke-width="1.1"/>
<polygon points="368.7,161.5 369.5,161.5 370.3,161.5 371.0,161.6 371.6,161.7 371.8,161.9 371.8,162.1 371.6,162.3 371.1,162.5 370.4,162.6 369.6,162.7 368.8,162.8 368.0,162.8 367.3,162.7 366.8,162.6 366.5,162.4 366.5,162.2 366.7,162.0 367.2,161.8 367.9,161.7" fill="#8e9690" stroke="#4b5449" stroke-width="1.1"/>
<polygon points="1578.0,1024.1 1580.9,1023.7 1584.0,1023.8 1587.0,1024.4 1589.5,1025.3 1591.5,1026.6 1592.6,1028.0 1592.7,1029.6 1591.9,1031.0 1590.2,1032.2 1587.8,1033.0 1585.0,1033.4 1581.9,1033.4 1578.9,1032.8 1576.3,1031.9 1574.4,1030.6 1573.3,1029.1 1573.1,1027.6 1573.9,1026.2 1575.6,1025.0" fill="#b9c0ad" stroke="#35588f" stroke-width="1.1"/>
<polygon points="1573.7,1029.9 1573.2,1028.8 1573.1,1027.7 1573.5,1026.7 1574.4,1025.7 1575.8,1024.9 1577.5,1024.3 1579.4,1023.9 1581.6,1023.7 1583.8,1023.8 1585.9,1024.1 1587.9,1024.7 1589.7,1025.4 1591.1,1026.3 1592.1,1027.3 1592.1,1029.7 1591.1,1028.8 1589.8,1027.9 1588.2,1027.2 1586.3,1026.7 1584.3,1026.4 1582.3,1026.3 1580.4,1026.4 1578.6,1026.8 1577.1,1027.3 1575.9,1028.1 1575.1,1029.0 1574.8,1029.9 1574.9,1031.0 1575.4,1032.0" fill="#4a5348"/>
<polygon points="1550.4,999.2 1553.3,998.8 1556.3,998.8 1559.2,999.4 1561.7,1000.3 1563.6,1001.5 1564.7,1002.9 1564.8,1004.4 1564.0,1005.8 1562.3,1007.0 1559.9,1007.8 1557.1,1008.2 1554.0,1008.1 1551.1,1007.6 1548.6,1006.7 1546.7,1005.4 1545.6,1004.0 1545.5,1002.5 1546.3,1001.1 1548.0,1000.0" fill="#b9c0ad" stroke="#35588f" stroke-width="1.1"/>
<polygon points="1546.0,1004.7 1545.5,1003.7 1545.5,1002.6 1545.9,1001.6 1546.9,1000.7 1548.2,999.9 1549.9,999.3 1551.8,998.9 1553.9,998.8 1556.1,998.8 1558.2,999.1 1560.2,999.7 1561.9,1000.4 1563.3,1001.2 1564.3,1002.2 1564.2,1004.6 1563.3,1003.7 1562.0,1002.8 1560.4,1002.1 1558.5,1001.6 1556.6,1001.3 1554.6,1001.2 1552.7,1001.4 1550.9,1001.7 1549.4,1002.3 1548.3,1003.0 1547.5,1003.8 1547.1,1004.8 1547.2,1005.8 1547.7,1006.8" fill="#4a5348"/>
<polygon points="1523.6,974.9 1526.4,974.5 1529.4,974.6 1532.2,975.1 1534.7,976.0 1536.6,977.2 1537.6,978.6 1537.7,980.0 1536.9,981.4 1535.2,982.5 1532.8,983.3 1530.0,983.7 1527.0,983.6 1524.1,983.1 1521.6,982.2 1519.8,981.0 1518.8,979.6 1518.7,978.1 1519.5,976.8 1521.2,975.7" fill="#b9c0ad" stroke="#35588f" stroke-width="1.1"/>
<polygon points="1519.2,980.3 1518.7,979.3 1518.7,978.2 1519.1,977.3 1520.0,976.4 1521.4,975.6 1523.0,975.0 1524.9,974.7 1527.0,974.5 1529.2,974.6 1531.2,974.9 1533.2,975.4 1534.9,976.1 1536.2,976.9 1537.2,977.9 1537.1,980.2 1536.2,979.3 1534.9,978.5 1533.3,977.8 1531.5,977.3 1529.6,977.0 1527.7,976.9 1525.8,977.0 1524.1,977.4 1522.6,977.9 1521.4,978.6 1520.6,979.4 1520.2,980.4 1520.3,981.3 1520.8,982.3" fill="#4a5348"/>
<polygon points="1497.5,951.3 1500.3,950.9 1503.2,951.0 1506.0,951.5 1508.5,952.4 1510.3,953.5 1511.3,954.9 1511.3,956.3 1510.5,957.6 1508.8,958.7 1506.5,959.4 1503.7,959.8 1500.7,959.8 1497.9,959.3 1495.5,958.4 1493.7,957.2 1492.7,955.9 1492.6,954.5 1493.5,953.2 1495.2,952.1" fill="#b9c0ad" stroke="#35588f" stroke-width="1.1"/>
<polygon points="1493.1,956.5 1492.6,955.6 1492.6,954.6 1493.1,953.6 1494.0,952.7 1495.3,952.0 1496.9,951.4 1498.8,951.1 1500.9,950.9 1503.0,951.0 1505.1,951.3 1507.0,951.8 1508.6,952.4 1509.9,953.3 1510.9,954.2 1510.7,956.4 1509.8,955.6 1508.6,954.8 1507.1,954.1 1505.3,953.6 1503.4,953.3 1501.5,953.3 1499.6,953.4 1497.9,953.7 1496.5,954.2 1495.3,954.9 1494.5,955.7 1494.1,956.6 1494.2,957.6 1494.6,958.5" fill="#4a5348"/>
<polygon points="1472.1,928.4 1474.9,928.0 1477.8,928.1 1480.6,928.6 1482.9,929.4 1484.7,930.5 1485.7,931.8 1485.7,933.2 1484.9,934.5 1483.2,935.5 1480.9,936.3 1478.1,936.6 1475.2,936.6 1472.4,936.1 1470.0,935.2 1468.3,934.1 1467.3,932.8 1467.3,931.4 1468.1,930.2 1469.8,929.1" fill="#b9c0ad" stroke="#35588f" stroke-width="1.1"/>
<polygon points="1467.7,933.5 1467.3,932.5 1467.3,931.5 1467.7,930.6 1468.7,929.8 1470.0,929.0 1471.6,928.5 1473.5,928.1 1475.5,928.0 1477.6,928.1 1479.6,928.3 1481.5,928.8 1483.1,929.5 1484.4,930.3 1485.3,931.2 1485.1,933.4 1484.3,932.5 1483.0,931.7 1481.5,931.1 1479.8,930.6 1478.0,930.3 1476.1,930.3 1474.2,930.4 1472.5,930.7 1471.1,931.2 1469.9,931.9 1469.1,932.7 1468.7,933.5 1468.8,934.4 1469.2,935.4" fill="#4a5348"/>
<polygon points="1447.5,906.1 1450.2,905.7 1453.0,905.8 1455.8,906.2 1458.1,907.1 1459.8,908.2 1460.7,909.4 1460.8,910.8 1459.9,912.0 1458.3,913.0 1456.0,913.8 1453.3,914.1 1450.4,914.0 1447.6,913.6 1445.3,912.7 1443.6,911.6 1442.7,910.4 1442.6,909.0 1443.5,907.8 1445.2,906.8" fill="#b9c0ad" stroke="#35588f" stroke-width="1.1"/>
<polygon points="1443.0,911.0 1442.6,910.1 1442.6,909.1 1443.1,908.2 1444.0,907.4 1445.3,906.7 1446.9,906.2 1448.8,905.8 1450.8,905.7 1452.8,905.8 1454.8,906.0 1456.7,906.5 1458.3,907.1 1459.5,907.9 1460.4,908.8 1460.2,910.9 1459.4,910.1 1458.2,909.3 1456.7,908.7 1455.0,908.3 1453.2,908.0 1451.3,907.9 1449.5,908.0 1447.8,908.3 1446.4,908.8 1445.2,909.5 1444.4,910.2 1444.0,911.1 1444.0,912.0 1444.5,912.9" fill="#4a5348"/>
<polygon points="1423.5,884.3 1426.1,884.0 1429.0,884.1 1431.7,884.5 1433.9,885.3 1435.6,886.4 1436.5,887.6 1436.5,888.9 1435.7,890.1 1434.0,891.1 1431.7,891.8 1429.1,892.2 1426.2,892.1 1423.5,891.7 1421.2,890.8 1419.5,889.8 1418.7,888.5 1418.7,887.2 1419.5,886.0 1421.2,885.0" fill="#b9c0ad" stroke="#35588f" stroke-width="1.1"/>
<polygon points="1419.0,889.2 1418.6,888.2 1418.6,887.3 1419.1,886.5 1420.0,885.7 1421.3,885.0 1422.9,884.5 1424.8,884.1 1426.7,884.0 1428.8,884.0 1430.7,884.3 1432.5,884.8 1434.1,885.4 1435.3,886.1 1436.2,887.0 1435.9,889.1 1435.1,888.3 1434.0,887.5 1432.5,886.9 1430.9,886.5 1429.1,886.2 1427.2,886.1 1425.4,886.3 1423.8,886.6 1422.3,887.0 1421.2,887.7 1420.4,888.4 1420.0,889.2 1420.0,890.1 1420.4,891.0" fill="#4a5348"/>
<polygon points="1400.1,863.2 1402.7,862.9 1405.5,862.9 1408.2,863.4 1410.4,864.2 1412.1,865.2 1412.9,866.4 1412.9,867.7 1412.1,868.8 1410.4,869.8 1408.2,870.5 1405.5,870.8 1402.7,870.8 1400.0,870.3 1397.8,869.5 1396.2,868.5 1395.3,867.3 1395.3,866.0 1396.2,864.9 1397.8,863.9" fill="#b9c0ad" stroke="#35588f" stroke-width="1.1"/>
<polygon points="1395.6,867.9 1395.2,867.0 1395.3,866.1 1395.8,865.3 1396.7,864.5 1398.0,863.8 1399.6,863.3 1401.4,863.0 1403.3,862.9 1405.3,862.9 1407.3,863.2 1409.0,863.6 1410.6,864.2 1411.8,865.0 1412.6,865.8 1412.3,867.8 1411.6,867.0 1410.4,866.3 1409.0,865.7 1407.4,865.3 1405.6,865.0 1403.8,865.0 1402.0,865.1 1400.4,865.4 1398.9,865.8 1397.8,866.4 1397.0,867.2 1396.6,868.0 1396.6,868.8 1397.0,869.6" fill="#4a5348"/>
<polygon points="1377.3,842.6 1380.0,842.3 1382.7,842.4 1385.3,842.8 1387.5,843.6 1389.1,844.6 1390.0,845.7 1389.9,847.0 1389.1,848.1 1387.4,849.1 1385.2,849.7 1382.6,850.0 1379.8,850.0 1377.2,849.6 1375.0,848.8 1373.4,847.8 1372.5,846.6 1372.6,845.4 1373.5,844.2 1375.1,843.3" fill="#b9c0ad" stroke="#35588f" stroke-width="1.1"/>
<polygon points="1372.9,847.2 1372.5,846.3 1372.5,845.5 1373.0,844.6 1374.0,843.9 1375.2,843.2 1376.8,842.7 1378.6,842.4 1380.5,842.3 1382.5,842.3 1384.4,842.6 1386.2,843.0 1387.7,843.6 1388.8,844.3 1389.6,845.1 1389.4,847.1 1388.6,846.3 1387.5,845.6 1386.1,845.1 1384.5,844.7 1382.7,844.4 1380.9,844.3 1379.2,844.4 1377.6,844.7 1376.2,845.2 1375.0,845.8 1374.2,846.5 1373.8,847.3 1373.8,848.1 1374.2,848.9" fill="#4a5348"/>
<polygon points="1355.2,822.6 1357.8,822.3 1360.5,822.3 1363.0,822.7 1365.2,823.5 1366.8,824.5 1367.6,825.6 1367.6,826.8 1366.7,827.9 1365.0,828.8 1362.8,829.5 1360.2,829.8 1357.5,829.7 1354.9,829.3 1352.7,828.6 1351.2,827.6 1350.4,826.4 1350.4,825.2 1351.3,824.1 1352.9,823.2" fill="#b9c0ad" stroke="#35588f" stroke-width="1.1"/>
<polygon points="1350.7,827.0 1350.3,826.2 1350.4,825.3 1350.9,824.5 1351.8,823.8 1353.1,823.2 1354.7,822.7 1356.4,822.4 1358.3,822.2 1360.3,822.3 1362.2,822.5 1363.9,823.0 1365.3,823.5 1366.5,824.2 1367.3,825.0 1367.0,826.9 1366.2,826.2 1365.1,825.5 1363.8,825.0 1362.2,824.6 1360.5,824.3 1358.7,824.2 1357.0,824.3 1355.4,824.6 1354.0,825.1 1352.8,825.6 1352.0,826.3 1351.6,827.1 1351.6,827.9 1352.0,828.7" fill="#4a5348"/>
<polygon points="1333.6,803.0 1336.1,802.7 1338.8,802.8 1341.3,803.2 1343.5,803.9 1345.0,804.9 1345.8,806.0 1345.7,807.2 1344.9,808.2 1343.2,809.1 1341.0,809.8 1338.5,810.1 1335.8,810.0 1333.2,809.6 1331.1,808.9 1329.6,807.9 1328.8,806.8 1328.9,805.6 1329.7,804.6 1331.4,803.7" fill="#b9c0ad" stroke="#35588f" stroke-width="1.1"/>
<polygon points="1329.1,807.4 1328.7,806.5 1328.8,805.7 1329.3,804.9 1330.2,804.2 1331.5,803.6 1333.1,803.1 1334.8,802.8 1336.7,802.7 1338.6,802.8 1340.5,803.0 1342.2,803.4 1343.6,804.0 1344.7,804.7 1345.5,805.4 1345.2,807.3 1344.4,806.6 1343.4,805.9 1342.0,805.4 1340.5,805.0 1338.8,804.7 1337.0,804.7 1335.3,804.8 1333.7,805.0 1332.4,805.5 1331.2,806.0 1330.4,806.7 1330.0,807.4 1330.0,808.2 1330.3,809.0" fill="#4a5348"/>
<polygon points="1312.5,784.0 1315.0,783.7 1317.7,783.7 1320.2,784.1 1322.3,784.9 1323.8,785.8 1324.5,786.9 1324.5,788.0 1323.6,789.1 1322.0,789.9 1319.8,790.6 1317.2,790.9 1314.6,790.8 1312.1,790.4 1310.0,789.7 1308.5,788.7 1307.7,787.7 1307.8,786.5 1308.7,785.5 1310.3,784.6" fill="#b9c0ad" stroke="#35588f" stroke-width="1.1"/>
<polygon points="1308.0,788.2 1307.7,787.4 1307.8,786.6 1308.3,785.8 1309.2,785.1 1310.5,784.5 1312.0,784.1 1313.7,783.8 1315.6,783.7 1317.5,783.7 1319.3,784.0 1321.0,784.4 1322.4,784.9 1323.5,785.6 1324.3,786.3 1323.9,788.1 1323.2,787.4 1322.2,786.8 1320.8,786.3 1319.3,785.9 1317.6,785.6 1315.9,785.6 1314.2,785.7 1312.7,785.9 1311.3,786.3 1310.2,786.9 1309.4,787.5 1308.9,788.3 1308.9,789.0 1309.2,789.8" fill="#4a5348"/>
<polygon points="1292.0,765.4 1294.5,765.1 1297.1,765.2 1299.5,765.6 1301.6,766.3 1303.1,767.2 1303.8,768.2 1303.7,769.3 1302.8,770.4 1301.2,771.2 1299.1,771.8 1296.6,772.1 1293.9,772.1 1291.5,771.7 1289.4,771.0 1287.9,770.1 1287.2,769.0 1287.3,767.9 1288.2,766.9 1289.8,766.0" fill="#b9c0ad" stroke="#35588f" stroke-width="1.1"/>
<polygon points="1287.5,769.5 1287.2,768.8 1287.3,768.0 1287.8,767.2 1288.7,766.5 1289.9,766.0 1291.5,765.5 1293.2,765.2 1295.0,765.1 1296.9,765.2 1298.7,765.4 1300.3,765.8 1301.7,766.3 1302.8,767.0 1303.5,767.7 1303.2,769.5 1302.5,768.8 1301.5,768.1 1300.2,767.6 1298.7,767.3 1297.0,767.0 1295.3,767.0 1293.6,767.1 1292.1,767.3 1290.7,767.7 1289.6,768.3 1288.8,768.9 1288.4,769.6 1288.3,770.3 1288.6,771.1" fill="#4a5348"/>
<polygon points="1271.9,747.3 1274.4,747.0 1277.0,747.1 1279.4,747.5 1281.5,748.1 1282.9,749.0 1283.6,750.1 1283.5,751.1 1282.6,752.1 1281.0,753.0 1278.9,753.6 1276.4,753.8 1273.8,753.8 1271.4,753.4 1269.3,752.7 1267.9,751.8 1267.2,750.8 1267.3,749.7 1268.2,748.7 1269.8,747.9" fill="#b9c0ad" stroke="#35588f" stroke-width="1.1"/>
<polygon points="1267.4,751.3 1267.2,750.6 1267.3,749.8 1267.8,749.1 1268.7,748.4 1269.9,747.8 1271.5,747.4 1273.2,747.1 1275.0,747.0 1276.8,747.1 1278.6,747.3 1280.2,747.7 1281.6,748.2 1282.6,748.8 1283.3,749.5 1283.0,751.3 1282.3,750.6 1281.3,750.0 1280.0,749.5 1278.5,749.1 1276.9,748.9 1275.2,748.8 1273.6,748.9 1272.0,749.1 1270.7,749.5 1269.6,750.1 1268.8,750.7 1268.3,751.4 1268.3,752.1 1268.6,752.8" fill="#4a5348"/>
<polygon points="1252.4,729.6 1254.9,729.4 1257.4,729.4 1259.8,729.8 1261.8,730.4 1263.2,731.3 1263.9,732.3 1263.8,733.4 1262.9,734.3 1261.3,735.2 1259.2,735.7 1256.7,736.0 1254.1,736.0 1251.7,735.6 1249.7,734.9 1248.3,734.0 1247.7,733.0 1247.8,732.0 1248.7,731.0 1250.3,730.2" fill="#b9c0ad" stroke="#35588f" stroke-width="1.1"/>
<polygon points="1247.9,733.5 1247.6,732.8 1247.7,732.1 1248.3,731.3 1249.2,730.7 1250.4,730.1 1251.9,729.7 1253.6,729.4 1255.4,729.3 1257.2,729.4 1259.0,729.6 1260.6,730.0 1261.9,730.5 1263.0,731.1 1263.6,731.8 1263.2,733.5 1262.6,732.8 1261.6,732.2 1260.3,731.7 1258.9,731.4 1257.3,731.2 1255.6,731.1 1254.0,731.2 1252.5,731.4 1251.1,731.8 1250.0,732.3 1249.2,732.9 1248.8,733.6 1248.7,734.3 1249.0,735.0" fill="#4a5348"/>
<polygon points="1233.3,712.4 1235.8,712.1 1238.3,712.2 1240.6,712.5 1242.6,713.2 1244.0,714.0 1244.6,715.0 1244.5,716.0 1243.6,717.0 1242.0,717.8 1239.9,718.3 1237.5,718.6 1235.0,718.5 1232.6,718.2 1230.6,717.5 1229.3,716.7 1228.6,715.7 1228.7,714.7 1229.6,713.7 1231.2,712.9" fill="#b9c0ad" stroke="#35588f" stroke-width="1.1"/>
<polygon points="1228.8,716.2 1228.6,715.5 1228.7,714.7 1229.2,714.0 1230.1,713.4 1231.4,712.9 1232.8,712.5 1234.5,712.2 1236.3,712.1 1238.1,712.1 1239.8,712.4 1241.4,712.7 1242.7,713.2 1243.7,713.8 1244.4,714.5 1244.0,716.1 1243.3,715.5 1242.4,714.9 1241.2,714.4 1239.7,714.1 1238.1,713.9 1236.5,713.8 1234.9,713.9 1233.4,714.1 1232.0,714.5 1230.9,715.0 1230.2,715.6 1229.7,716.3 1229.6,716.9 1229.9,717.6" fill="#4a5348"/>
<polygon points="1214.7,695.5 1217.1,695.3 1219.6,695.3 1221.9,695.7 1223.9,696.3 1225.2,697.1 1225.8,698.1 1225.7,699.1 1224.8,700.0 1223.2,700.8 1221.2,701.4 1218.7,701.6 1216.2,701.6 1213.9,701.2 1212.0,700.6 1210.6,699.7 1210.0,698.8 1210.1,697.8 1211.0,696.8 1212.6,696.1" fill="#b9c0ad" stroke="#35588f" stroke-width="1.1"/>
<polygon points="1210.2,699.3 1210.0,698.6 1210.1,697.8 1210.6,697.2 1211.5,696.5 1212.8,696.0 1214.2,695.6 1215.9,695.4 1217.7,695.3 1219.4,695.3 1221.1,695.5 1222.7,695.9 1224.0,696.4 1225.0,696.9 1225.6,697.6 1225.2,699.2 1224.6,698.6 1223.6,698.0 1222.4,697.5 1221.0,697.2 1219.4,697.0 1217.8,696.9 1216.2,697.0 1214.7,697.3 1213.4,697.6 1212.3,698.1 1211.5,698.7 1211.1,699.3 1211.0,700.0 1211.2,700.7" fill="#4a5348"/>
<polygon points="1196.5,679.1 1198.9,678.8 1201.4,678.9 1203.7,679.2 1205.6,679.8 1206.9,680.7 1207.5,681.6 1207.4,682.6 1206.5,683.5 1204.9,684.2 1202.8,684.8 1200.4,685.0 1198.0,685.0 1195.7,684.6 1193.8,684.0 1192.4,683.2 1191.8,682.2 1192.0,681.3 1192.9,680.4 1194.5,679.6" fill="#b9c0ad" stroke="#35588f" stroke-width="1.1"/>
<polygon points="1192.0,682.7 1191.8,682.0 1191.9,681.3 1192.5,680.7 1193.4,680.1 1194.6,679.6 1196.1,679.2 1197.7,678.9 1199.4,678.8 1201.2,678.9 1202.9,679.1 1204.4,679.4 1205.7,679.9 1206.7,680.5 1207.3,681.1 1206.8,682.7 1206.2,682.1 1205.3,681.5 1204.1,681.1 1202.7,680.7 1201.2,680.5 1199.6,680.5 1198.0,680.5 1196.5,680.8 1195.2,681.1 1194.1,681.6 1193.3,682.2 1192.9,682.8 1192.8,683.4 1193.0,684.1" fill="#4a5348"/>
<polygon points="1178.8,663.0 1181.1,662.8 1183.5,662.8 1185.8,663.2 1187.7,663.8 1189.0,664.5 1189.6,665.5 1189.4,666.4 1188.5,667.3 1187.0,668.0 1184.9,668.6 1182.5,668.8 1180.1,668.8 1177.8,668.4 1176.0,667.8 1174.7,667.0 1174.1,666.1 1174.2,665.2 1175.1,664.3 1176.7,663.5" fill="#b9c0ad" stroke="#35588f" stroke-width="1.1"/>
<polygon points="1174.3,666.6 1174.0,665.9 1174.2,665.2 1174.7,664.6 1175.6,664.0 1176.8,663.5 1178.3,663.1 1179.9,662.9 1181.6,662.8 1183.4,662.8 1185.0,663.0 1186.5,663.3 1187.8,663.8 1188.8,664.4 1189.4,665.0 1188.9,666.5 1188.3,665.9 1187.4,665.4 1186.2,664.9 1184.9,664.6 1183.3,664.4 1181.8,664.4 1180.2,664.4 1178.7,664.7 1177.4,665.0 1176.4,665.5 1175.6,666.0 1175.1,666.6 1175.0,667.3 1175.3,667.9" fill="#4a5348"/>
<polygon points="1161.4,647.3 1163.7,647.1 1166.1,647.1 1168.4,647.5 1170.2,648.0 1171.5,648.8 1172.1,649.7 1171.9,650.6 1171.0,651.5 1169.5,652.2 1167.4,652.7 1165.1,653.0 1162.7,652.9 1160.4,652.6 1158.6,652.0 1157.3,651.2 1156.7,650.3 1156.9,649.4 1157.8,648.5 1159.4,647.8" fill="#b9c0ad" stroke="#35588f" stroke-width="1.1"/>
<polygon points="1156.9,650.8 1156.7,650.1 1156.9,649.5 1157.4,648.8 1158.3,648.3 1159.5,647.8 1160.9,647.4 1162.6,647.2 1164.3,647.1 1166.0,647.1 1167.6,647.3 1169.1,647.6 1170.3,648.1 1171.3,648.6 1171.9,649.3 1171.4,650.7 1170.8,650.2 1169.9,649.6 1168.8,649.2 1167.4,648.9 1165.9,648.7 1164.4,648.6 1162.8,648.7 1161.4,648.9 1160.1,649.3 1159.0,649.7 1158.2,650.3 1157.8,650.8 1157.6,651.5 1157.9,652.1" fill="#4a5348"/>
<polygon points="1144.4,632.0 1146.8,631.7 1149.1,631.8 1151.3,632.1 1153.1,632.7 1154.4,633.4 1155.0,634.3 1154.8,635.2 1153.9,636.1 1152.3,636.8 1150.3,637.3 1148.0,637.5 1145.6,637.5 1143.4,637.1 1141.6,636.6 1140.3,635.8 1139.8,634.9 1140.0,634.0 1140.9,633.2 1142.4,632.5" fill="#b9c0ad" stroke="#35588f" stroke-width="1.1"/>
<polygon points="1140.0,635.4 1139.8,634.7 1139.9,634.1 1140.5,633.5 1141.4,632.9 1142.6,632.4 1144.0,632.1 1145.6,631.8 1147.3,631.7 1149.0,631.8 1150.6,632.0 1152.0,632.3 1153.3,632.7 1154.2,633.3 1154.8,633.9 1154.3,635.3 1153.7,634.8 1152.8,634.2 1151.7,633.8 1150.4,633.5 1148.9,633.3 1147.4,633.3 1145.8,633.3 1144.4,633.5 1143.1,633.9 1142.0,634.3 1141.3,634.8 1140.8,635.4 1140.7,636.0 1140.9,636.6" fill="#4a5348"/>
<polygon points="1127.9,617.0 1130.2,616.7 1132.5,616.8 1134.7,617.1 1136.5,617.7 1137.7,618.4 1138.2,619.3 1138.0,620.2 1137.1,621.0 1135.6,621.7 1133.6,622.2 1131.3,622.4 1129.0,622.3 1126.8,622.0 1125.0,621.5 1123.8,620.7 1123.2,619.9 1123.4,619.0 1124.3,618.1 1125.9,617.5" fill="#b9c0ad" stroke="#35588f" stroke-width="1.1"/>
<polygon points="1123.4,620.3 1123.2,619.7 1123.4,619.0 1123.9,618.4 1124.8,617.9 1126.0,617.4 1127.4,617.1 1129.0,616.8 1130.7,616.7 1132.3,616.8 1133.9,617.0 1135.4,617.3 1136.6,617.7 1137.5,618.2 1138.0,618.8 1137.5,620.3 1137.0,619.7 1136.1,619.2 1135.0,618.8 1133.7,618.5 1132.2,618.3 1130.7,618.2 1129.2,618.3 1127.8,618.5 1126.5,618.8 1125.5,619.3 1124.7,619.8 1124.2,620.3 1124.1,620.9 1124.3,621.5" fill="#4a5348"/>
<polygon points="1111.7,602.3 1113.9,602.1 1116.2,602.1 1118.4,602.4 1120.1,603.0 1121.3,603.7 1121.9,604.6 1121.7,605.4 1120.8,606.2 1119.3,606.9 1117.3,607.4 1115.0,607.6 1112.7,607.6 1110.5,607.2 1108.7,606.7 1107.5,606.0 1107.0,605.1 1107.2,604.3 1108.1,603.5 1109.7,602.8" fill="#b9c0ad" stroke="#35588f" stroke-width="1.1"/>
<polygon points="1107.2,605.6 1107.0,604.9 1107.2,604.3 1107.7,603.7 1108.6,603.2 1109.8,602.7 1111.2,602.4 1112.8,602.2 1114.4,602.1 1116.1,602.1 1117.6,602.3 1119.1,602.6 1120.2,603.0 1121.1,603.5 1121.7,604.1 1121.2,605.5 1120.6,605.0 1119.8,604.5 1118.7,604.1 1117.4,603.8 1116.0,603.6 1114.5,603.5 1113.0,603.6 1111.5,603.8 1110.3,604.1 1109.2,604.5 1108.5,605.0 1108.0,605.6 1107.9,606.2 1108.1,606.8" fill="#4a5348"/>
<polygon points="1095.8,588.0 1098.0,587.7 1100.3,587.8 1102.4,588.1 1104.2,588.6 1105.4,589.3 1105.9,590.2 1105.7,591.0 1104.8,591.8 1103.3,592.5 1101.3,592.9 1099.0,593.1 1096.7,593.1 1094.6,592.8 1092.9,592.3 1091.7,591.5 1091.2,590.7 1091.4,589.9 1092.3,589.1 1093.8,588.4" fill="#b9c0ad" stroke="#35588f" stroke-width="1.1"/>
<polygon points="1091.3,591.1 1091.2,590.5 1091.3,589.9 1091.9,589.4 1092.8,588.8 1093.9,588.4 1095.3,588.0 1096.9,587.8 1098.5,587.7 1100.2,587.8 1101.7,588.0 1103.1,588.3 1104.3,588.7 1105.2,589.2 1105.7,589.7 1105.2,591.1 1104.6,590.6 1103.8,590.1 1102.7,589.7 1101.5,589.4 1100.0,589.2 1098.6,589.2 1097.1,589.2 1095.7,589.4 1094.4,589.7 1093.4,590.2 1092.6,590.6 1092.1,591.2 1092.0,591.8 1092.2,592.3" fill="#4a5348"/>
<polygon points="1080.3,573.9 1082.5,573.7 1084.8,573.8 1086.8,574.1 1088.6,574.6 1089.7,575.3 1090.2,576.1 1090.0,576.9 1089.1,577.7 1087.6,578.3 1085.6,578.8 1083.4,579.0 1081.1,579.0 1079.0,578.7 1077.3,578.1 1076.2,577.4 1075.7,576.6 1075.9,575.8 1076.8,575.0 1078.3,574.4" fill="#b9c0ad" stroke="#35588f" stroke-width="1.1"/>
<polygon points="1075.8,577.0 1075.7,576.4 1075.9,575.9 1076.4,575.3 1077.3,574.8 1078.4,574.3 1079.8,574.0 1081.4,573.8 1083.0,573.7 1084.6,573.7 1086.1,573.9 1087.5,574.2 1088.7,574.6 1089.5,575.1 1090.1,575.7 1089.5,577.0 1089.0,576.5 1088.2,576.0 1087.1,575.6 1085.9,575.3 1084.5,575.1 1083.0,575.1 1081.5,575.2 1080.1,575.4 1078.9,575.7 1077.9,576.1 1077.1,576.5 1076.6,577.1 1076.5,577.6 1076.7,578.2" fill="#4a5348"/>
<polygon points="1065.1,560.2 1067.3,560.0 1069.5,560.0 1071.6,560.3 1073.3,560.8 1074.4,561.5 1074.9,562.3 1074.7,563.1 1073.8,563.9 1072.3,564.5 1070.3,564.9 1068.1,565.2 1065.9,565.1 1063.8,564.8 1062.1,564.3 1061.0,563.6 1060.5,562.8 1060.7,562.0 1061.6,561.3 1063.1,560.6" fill="#b9c0ad" stroke="#35588f" stroke-width="1.1"/>
<polygon points="1060.7,563.2 1060.5,562.7 1060.7,562.1 1061.2,561.5 1062.1,561.0 1063.3,560.6 1064.6,560.3 1066.2,560.1 1067.8,560.0 1069.4,560.0 1070.9,560.2 1072.2,560.5 1073.4,560.9 1074.2,561.4 1074.8,561.9 1074.2,563.2 1073.7,562.7 1072.9,562.2 1071.9,561.8 1070.6,561.6 1069.2,561.4 1067.8,561.3 1066.3,561.4 1064.9,561.6 1063.7,561.9 1062.7,562.3 1061.9,562.8 1061.4,563.3 1061.3,563.8 1061.5,564.4" fill="#4a5348"/>
<polygon points="1050.2,546.7 1052.4,546.5 1054.6,546.6 1056.7,546.9 1058.3,547.4 1059.4,548.0 1059.9,548.8 1059.7,549.6 1058.8,550.3 1057.3,551.0 1055.4,551.4 1053.2,551.6 1051.0,551.6 1048.9,551.3 1047.2,550.8 1046.1,550.1 1045.7,549.3 1045.9,548.5 1046.8,547.8 1048.3,547.2" fill="#b9c0ad" stroke="#35588f" stroke-width="1.1"/>
<polygon points="1045.8,549.7 1045.7,549.2 1045.9,548.6 1046.4,548.0 1047.3,547.6 1048.4,547.1 1049.8,546.8 1051.3,546.6 1052.9,546.5 1054.5,546.6 1056.0,546.7 1057.3,547.0 1058.4,547.4 1059.3,547.9 1059.8,548.4 1059.2,549.7 1058.7,549.2 1057.9,548.7 1056.9,548.4 1055.7,548.1 1054.3,547.9 1052.9,547.9 1051.4,547.9 1050.1,548.1 1048.8,548.4 1047.8,548.8 1047.0,549.3 1046.6,549.8 1046.4,550.3 1046.6,550.8" fill="#4a5348"/>
<polygon points="1035.7,533.6 1037.8,533.4 1040.0,533.4 1042.0,533.7 1043.7,534.2 1044.8,534.9 1045.2,535.6 1045.0,536.4 1044.1,537.1 1042.6,537.7 1040.7,538.1 1038.5,538.3 1036.3,538.3 1034.3,538.0 1032.7,537.5 1031.6,536.9 1031.1,536.1 1031.4,535.3 1032.3,534.6 1033.8,534.0" fill="#b9c0ad" stroke="#35588f" stroke-width="1.1"/>
<polygon points="1031.3,536.5 1031.1,535.9 1031.3,535.4 1031.9,534.9 1032.7,534.4 1033.9,534.0 1035.2,533.7 1036.7,533.5 1038.3,533.4 1039.9,533.4 1041.4,533.6 1042.7,533.9 1043.8,534.2 1044.6,534.7 1045.1,535.2 1044.5,536.5 1044.0,536.0 1043.3,535.5 1042.3,535.2 1041.0,534.9 1039.7,534.7 1038.3,534.7 1036.8,534.8 1035.5,534.9 1034.3,535.2 1033.3,535.6 1032.5,536.0 1032.0,536.5 1031.9,537.1 1032.0,537.6" fill="#4a5348"/>
<polygon points="1021.4,520.7 1023.6,520.5 1025.7,520.5 1027.7,520.8 1029.3,521.3 1030.4,521.9 1030.9,522.7 1030.6,523.4 1029.7,524.1 1028.3,524.7 1026.4,525.2 1024.2,525.4 1022.0,525.3 1020.0,525.0 1018.4,524.6 1017.3,523.9 1016.9,523.2 1017.1,522.4 1018.0,521.7 1019.5,521.1" fill="#b9c0ad" stroke="#35588f" stroke-width="1.1"/>
<polygon points="1017.0,523.6 1016.9,523.0 1017.1,522.5 1017.7,521.9 1018.5,521.5 1019.6,521.1 1021.0,520.8 1022.5,520.6 1024.0,520.5 1025.6,520.5 1027.0,520.7 1028.4,521.0 1029.4,521.3 1030.2,521.8 1030.7,522.3 1030.1,523.5 1029.7,523.0 1028.9,522.6 1027.9,522.3 1026.7,522.0 1025.4,521.8 1024.0,521.8 1022.6,521.8 1021.2,522.0 1020.0,522.3 1019.0,522.7 1018.3,523.1 1017.8,523.6 1017.6,524.1 1017.8,524.6" fill="#4a5348"/>
<polygon points="1007.5,508.1 1009.6,507.9 1011.7,507.9 1013.7,508.2 1015.3,508.7 1016.4,509.3 1016.8,510.0 1016.6,510.8 1015.7,511.5 1014.2,512.0 1012.3,512.4 1010.2,512.6 1008.0,512.6 1006.0,512.3 1004.4,511.9 1003.4,511.2 1003.0,510.5 1003.2,509.8 1004.1,509.1 1005.6,508.5" fill="#b9c0ad" stroke="#35588f" stroke-width="1.1"/>
<polygon points="1003.1,510.9 1003.0,510.3 1003.2,509.8 1003.7,509.3 1004.6,508.8 1005.7,508.4 1007.0,508.1 1008.5,508.0 1010.1,507.9 1011.6,507.9 1013.0,508.1 1014.3,508.3 1015.4,508.7 1016.2,509.1 1016.7,509.6 1016.1,510.8 1015.6,510.4 1014.9,509.9 1013.9,509.6 1012.7,509.3 1011.4,509.2 1010.0,509.1 1008.6,509.2 1007.3,509.4 1006.1,509.6 1005.1,510.0 1004.3,510.4 1003.8,510.9 1003.7,511.4 1003.8,511.9" fill="#4a5348"/>
<polygon points="993.8,495.7 995.9,495.5 998.0,495.6 1000.0,495.8 1001.5,496.3 1002.6,496.9 1003.0,497.6 1002.8,498.3 1001.9,499.0 1000.4,499.6 998.5,500.0 996.4,500.2 994.3,500.1 992.3,499.9 990.8,499.4 989.7,498.8 989.3,498.1 989.6,497.4 990.5,496.7 991.9,496.1" fill="#b9c0ad" stroke="#35588f" stroke-width="1.1"/>
<polygon points="989.4,498.4 989.3,497.9 989.5,497.4 990.1,496.9 990.9,496.5 992.0,496.1 993.4,495.8 994.8,495.6 996.4,495.5 997.9,495.6 999.3,495.7 1000.6,496.0 1001.6,496.3 1002.4,496.8 1002.9,497.2 1002.3,498.4 1001.8,498.0 1001.1,497.5 1000.1,497.2 999.0,496.9 997.7,496.8 996.3,496.7 994.9,496.8 993.6,497.0 992.4,497.2 991.4,497.6 990.6,498.0 990.2,498.5 990.0,499.0 990.1,499.5" fill="#4a5348"/>
<polygon points="980.4,483.6 982.5,483.4 984.6,483.4 986.5,483.7 988.1,484.2 989.1,484.8 989.5,485.5 989.2,486.2 988.3,486.8 986.9,487.4 985.0,487.8 982.9,488.0 980.8,487.9 978.9,487.7 977.4,487.2 976.3,486.6 975.9,485.9 976.2,485.2 977.1,484.5 978.5,484.0" fill="#b9c0ad" stroke="#35588f" stroke-width="1.1"/>
<polygon points="976.0,486.3 975.9,485.8 976.1,485.3 976.7,484.8 977.6,484.3 978.7,483.9 980.0,483.7 981.4,483.5 982.9,483.4 984.4,483.4 985.9,483.6 987.1,483.8 988.2,484.2 988.9,484.6 989.4,485.1 988.8,486.2 988.3,485.8 987.6,485.4 986.7,485.1 985.5,484.8 984.2,484.6 982.8,484.6 981.5,484.7 980.2,484.8 979.0,485.1 978.0,485.4 977.2,485.9 976.8,486.3 976.6,486.8 976.7,487.3" fill="#4a5348"/>
<polygon points="967.3,471.7 969.3,471.5 971.4,471.6 973.3,471.8 974.8,472.3 975.9,472.9 976.3,473.5 976.0,474.2 975.1,474.9 973.7,475.4 971.8,475.8 969.7,476.0 967.7,476.0 965.7,475.7 964.2,475.3 963.2,474.7 962.8,474.0 963.1,473.3 964.0,472.6 965.4,472.1" fill="#b9c0ad" stroke="#35588f" stroke-width="1.1"/>
<polygon points="962.9,474.3 962.8,473.8 963.0,473.3 963.6,472.9 964.4,472.4 965.5,472.1 966.8,471.8 968.3,471.6 969.8,471.5 971.3,471.6 972.7,471.7 973.9,472.0 974.9,472.3 975.7,472.7 976.1,473.2 975.5,474.3 975.1,473.9 974.4,473.5 973.4,473.1 972.3,472.9 971.0,472.8 969.7,472.7 968.3,472.8 967.0,472.9 965.9,473.2 964.9,473.5 964.1,473.9 963.6,474.4 963.5,474.9 963.6,475.3" fill="#4a5348"/>
<polygon points="954.4,460.1 956.4,459.9 958.5,459.9 960.4,460.2 961.9,460.6 962.9,461.2 963.3,461.9 963.0,462.6 962.1,463.2 960.7,463.7 958.9,464.1 956.8,464.3 954.7,464.2 952.8,464.0 951.3,463.6 950.3,463.0 950.0,462.3 950.2,461.6 951.1,461.0 952.6,460.4" fill="#b9c0ad" stroke="#35588f" stroke-width="1.1"/>
<polygon points="950.1,462.6 950.0,462.2 950.2,461.7 950.7,461.2 951.6,460.8 952.7,460.4 954.0,460.1 955.4,460.0 956.9,459.9 958.4,459.9 959.7,460.1 961.0,460.3 962.0,460.7 962.7,461.1 963.2,461.5 962.5,462.6 962.1,462.2 961.4,461.8 960.5,461.5 959.4,461.2 958.1,461.1 956.8,461.0 955.4,461.1 954.1,461.3 953.0,461.5 952.0,461.8 951.3,462.2 950.8,462.7 950.6,463.1 950.7,463.6" fill="#4a5348"/>
<polygon points="941.8,448.7 943.8,448.5 945.8,448.5 947.7,448.8 949.2,449.2 950.2,449.8 950.6,450.4 950.3,451.1 949.4,451.7 948.0,452.2 946.1,452.6 944.1,452.8 942.1,452.7 940.2,452.5 938.7,452.1 937.7,451.5 937.4,450.8 937.6,450.2 938.5,449.5 940.0,449.0" fill="#b9c0ad" stroke="#35588f" stroke-width="1.1"/>
<polygon points="937.5,451.2 937.4,450.7 937.6,450.2 938.2,449.8 939.0,449.3 940.1,449.0 941.4,448.7 942.8,448.5 944.3,448.5 945.7,448.5 947.1,448.7 948.3,448.9 949.3,449.2 950.0,449.6 950.4,450.1 949.8,451.2 949.4,450.7 948.7,450.4 947.8,450.0 946.7,449.8 945.4,449.7 944.1,449.6 942.8,449.7 941.5,449.8 940.4,450.1 939.4,450.4 938.6,450.8 938.2,451.2 938.0,451.7 938.1,452.1" fill="#4a5348"/>
<polygon points="929.4,437.5 931.4,437.3 933.4,437.3 935.3,437.6 936.7,438.0 937.7,438.5 938.1,439.2 937.8,439.8 936.9,440.5 935.5,441.0 933.7,441.3 931.7,441.5 929.6,441.5 927.8,441.2 926.3,440.8 925.4,440.3 925.0,439.6 925.3,439.0 926.2,438.3 927.6,437.8" fill="#b9c0ad" stroke="#35588f" stroke-width="1.1"/>
<polygon points="925.1,439.9 925.0,439.5 925.2,439.0 925.8,438.5 926.6,438.1 927.7,437.8 929.0,437.5 930.4,437.4 931.9,437.3 933.3,437.3 934.7,437.5 935.9,437.7 936.8,438.0 937.6,438.4 938.0,438.9 937.3,439.9 936.9,439.5 936.3,439.1 935.4,438.8 934.3,438.6 933.0,438.4 931.7,438.4 930.4,438.5 929.1,438.6 928.0,438.9 927.0,439.2 926.3,439.6 925.8,440.0 925.6,440.4 925.7,440.9" fill="#4a5348"/>
<polygon points="917.3,426.5 919.3,426.3 921.3,426.4 923.1,426.6 924.5,427.0 925.5,427.5 925.8,428.2 925.6,428.8 924.7,429.4 923.3,429.9 921.5,430.3 919.5,430.5 917.5,430.4 915.6,430.2 914.2,429.8 913.2,429.2 912.9,428.6 913.2,427.9 914.1,427.3 915.5,426.8" fill="#b9c0ad" stroke="#35588f" stroke-width="1.1"/>
<polygon points="913.0,428.9 912.9,428.5 913.1,428.0 913.7,427.5 914.5,427.1 915.6,426.8 916.9,426.5 918.2,426.4 919.7,426.3 921.1,426.3 922.5,426.5 923.6,426.7 924.6,427.0 925.3,427.4 925.7,427.9 925.1,428.9 924.7,428.5 924.0,428.1 923.2,427.8 922.1,427.6 920.8,427.4 919.5,427.4 918.2,427.5 917.0,427.6 915.8,427.8 914.9,428.2 914.1,428.5 913.7,429.0 913.5,429.4 913.6,429.8" fill="#4a5348"/>
<polygon points="905.4,415.7 907.3,415.6 909.3,415.6 911.1,415.8 912.6,416.2 913.5,416.8 913.8,417.4 913.5,418.0 912.7,418.6 911.3,419.1 909.5,419.4 907.5,419.6 905.5,419.6 903.7,419.3 902.3,418.9 901.3,418.4 901.0,417.8 901.3,417.1 902.2,416.6 903.6,416.1" fill="#b9c0ad" stroke="#35588f" stroke-width="1.1"/>
<polygon points="901.1,418.1 901.0,417.6 901.2,417.2 901.8,416.8 902.6,416.4 903.7,416.0 905.0,415.8 906.3,415.6 907.8,415.5 909.2,415.6 910.5,415.7 911.7,415.9 912.6,416.3 913.3,416.6 913.7,417.1 913.1,418.1 912.7,417.7 912.1,417.3 911.2,417.0 910.1,416.8 908.9,416.7 907.6,416.6 906.3,416.7 905.1,416.8 903.9,417.1 903.0,417.4 902.2,417.7 901.8,418.1 901.6,418.6 901.7,419.0" fill="#4a5348"/>
<polygon points="893.7,405.1 895.6,405.0 897.6,405.0 899.4,405.3 900.8,405.6 901.7,406.2 902.1,406.8 901.8,407.4 900.9,408.0 899.5,408.5 897.7,408.8 895.8,409.0 893.8,408.9 892.0,408.7 890.6,408.3 889.7,407.8 889.3,407.2 889.6,406.6 890.5,406.0 891.9,405.5" fill="#b9c0ad" stroke="#35588f" stroke-width="1.1"/>
<polygon points="889.4,407.5 889.3,407.0 889.6,406.6 890.1,406.2 891.0,405.8 892.0,405.5 893.3,405.2 894.6,405.0 896.1,405.0 897.5,405.0 898.8,405.2 899.9,405.4 900.9,405.7 901.6,406.1 902.0,406.5 901.3,407.5 900.9,407.1 900.3,406.7 899.4,406.4 898.4,406.2 897.2,406.1 895.9,406.0 894.6,406.1 893.4,406.2 892.3,406.5 891.3,406.8 890.6,407.1 890.1,407.5 889.9,407.9 890.0,408.4" fill="#4a5348"/>
<polygon points="882.2,394.8 884.2,394.6 886.1,394.7 887.9,394.9 889.3,395.3 890.2,395.8 890.5,396.4 890.2,397.0 889.3,397.6 887.9,398.0 886.2,398.4 884.2,398.5 882.3,398.5 880.5,398.3 879.1,397.9 878.2,397.4 877.9,396.8 878.2,396.2 879.1,395.6 880.5,395.1" fill="#b9c0ad" stroke="#35588f" stroke-width="1.1"/>
<polygon points="878.0,397.1 877.9,396.6 878.1,396.2 878.7,395.8 879.5,395.4 880.6,395.1 881.8,394.8 883.2,394.7 884.6,394.6 886.0,394.6 887.3,394.8 888.4,395.0 889.3,395.3 890.0,395.7 890.4,396.1 889.8,397.1 889.4,396.7 888.8,396.3 887.9,396.0 886.8,395.8 885.7,395.7 884.4,395.6 883.1,395.7 881.9,395.8 880.8,396.1 879.8,396.4 879.1,396.7 878.6,397.1 878.4,397.5 878.5,397.9" fill="#4a5348"/>
<polygon points="871.0,384.6 872.9,384.4 874.8,384.5 876.6,384.7 877.9,385.1 878.8,385.6 879.1,386.2 878.9,386.8 878.0,387.3 876.6,387.8 874.9,388.1 872.9,388.3 871.0,388.2 869.2,388.0 867.9,387.6 867.0,387.1 866.7,386.5 867.0,385.9 867.8,385.4 869.2,384.9" fill="#b9c0ad" stroke="#35588f" stroke-width="1.1"/>
<polygon points="866.7,386.8 866.7,386.4 866.9,386.0 867.5,385.6 868.3,385.2 869.3,384.9 870.6,384.7 871.9,384.5 873.3,384.4 874.7,384.5 876.0,384.6 877.1,384.8 878.0,385.1 878.7,385.5 879.1,385.9 878.4,386.8 878.0,386.5 877.4,386.1 876.6,385.8 875.5,385.6 874.4,385.5 873.1,385.5 871.8,385.5 870.6,385.6 869.5,385.9 868.6,386.2 867.9,386.5 867.4,386.9 867.2,387.3 867.3,387.7" fill="#4a5348"/>
<polygon points="859.9,374.6 861.8,374.5 863.7,374.5 865.5,374.7 866.8,375.1 867.7,375.6 868.0,376.1 867.7,376.7 866.8,377.3 865.5,377.7 863.7,378.1 861.8,378.2 859.9,378.2 858.2,378.0 856.8,377.6 855.9,377.1 855.6,376.5 855.9,375.9 856.8,375.4 858.2,374.9" fill="#b9c0ad" stroke="#35588f" stroke-width="1.1"/>
<polygon points="855.7,376.8 855.6,376.4 855.9,376.0 856.4,375.6 857.3,375.2 858.3,374.9 859.5,374.7 860.9,374.5 862.2,374.4 863.6,374.5 864.9,374.6 866.0,374.8 866.9,375.1 867.6,375.5 867.9,375.9 867.3,376.8 866.9,376.4 866.3,376.1 865.5,375.8 864.4,375.6 863.3,375.5 862.0,375.4 860.8,375.5 859.6,375.6 858.5,375.8 857.6,376.1 856.8,376.5 856.4,376.8 856.1,377.2 856.2,377.6" fill="#4a5348"/>
<polygon points="849.1,364.8 851.0,364.6 852.8,364.7 854.6,364.9 855.9,365.3 856.8,365.7 857.1,366.3 856.8,366.9 855.9,367.4 854.5,367.9 852.8,368.2 850.9,368.3 849.0,368.3 847.3,368.1 846.0,367.7 845.1,367.2 844.8,366.7 845.1,366.1 846.0,365.6 847.3,365.1" fill="#b9c0ad" stroke="#35588f" stroke-width="1.1"/>
<polygon points="844.9,367.0 844.8,366.5 845.1,366.1 845.6,365.7 846.4,365.4 847.5,365.1 848.7,364.8 850.0,364.7 851.4,364.6 852.7,364.7 854.0,364.8 855.1,365.0 856.0,365.3 856.6,365.6 857.0,366.0 856.3,367.0 856.0,366.6 855.4,366.3 854.6,366.0 853.5,365.8 852.4,365.7 851.2,365.6 849.9,365.7 848.7,365.8 847.6,366.0 846.7,366.3 846.0,366.6 845.5,367.0 845.3,367.4 845.4,367.8" fill="#4a5348"/>
<polygon points="838.4,355.2 840.3,355.0 842.2,355.0 843.9,355.3 845.2,355.6 846.0,356.1 846.3,356.6 846.0,357.2 845.2,357.7 843.8,358.2 842.1,358.5 840.2,358.6 838.3,358.6 836.6,358.4 835.3,358.0 834.4,357.6 834.2,357.0 834.5,356.4 835.4,355.9 836.7,355.5" fill="#b9c0ad" stroke="#35588f" stroke-width="1.1"/>
<polygon points="834.2,357.3 834.2,356.9 834.4,356.5 835.0,356.1 835.8,355.7 836.8,355.4 838.0,355.2 839.3,355.1 840.7,355.0 842.0,355.0 843.3,355.2 844.4,355.4 845.3,355.6 845.9,356.0 846.3,356.4 845.6,357.3 845.3,356.9 844.7,356.6 843.8,356.3 842.8,356.1 841.7,356.0 840.5,356.0 839.3,356.0 838.1,356.1 837.0,356.4 836.1,356.6 835.3,357.0 834.9,357.3 834.7,357.7 834.7,358.1" fill="#4a5348"/>
<polygon points="827.9,345.7 829.8,345.6 831.7,345.6 833.3,345.8 834.7,346.1 835.5,346.6 835.8,347.2 835.5,347.7 834.6,348.2 833.3,348.7 831.6,349.0 829.7,349.1 827.8,349.1 826.2,348.9 824.8,348.5 824.0,348.0 823.7,347.5 824.0,346.9 824.9,346.4 826.3,346.0" fill="#b9c0ad" stroke="#35588f" stroke-width="1.1"/>
<polygon points="823.8,347.8 823.7,347.4 824.0,347.0 824.5,346.6 825.3,346.3 826.4,346.0 827.6,345.7 828.9,345.6 830.2,345.5 831.5,345.6 832.8,345.7 833.9,345.9 834.7,346.2 835.4,346.5 835.7,346.9 835.0,347.8 834.7,347.4 834.1,347.1 833.3,346.8 832.3,346.6 831.2,346.5 830.0,346.5 828.8,346.5 827.6,346.7 826.5,346.9 825.6,347.1 824.9,347.5 824.4,347.8 824.2,348.2 824.3,348.6" fill="#4a5348"/>
<polygon points="817.7,336.4 819.5,336.3 821.4,336.3 823.0,336.5 824.3,336.8 825.2,337.3 825.4,337.8 825.1,338.4 824.2,338.9 822.9,339.3 821.2,339.6 819.4,339.8 817.5,339.7 815.9,339.5 814.6,339.2 813.7,338.7 813.5,338.2 813.8,337.6 814.6,337.1 816.0,336.7" fill="#465b78" stroke="#35588f" stroke-width="0.8"/>
<polygon points="807.6,327.3 809.4,327.1 811.2,327.2 812.9,327.4 814.2,327.7 815.0,328.2 815.2,328.7 814.9,329.2 814.1,329.7 812.7,330.1 811.1,330.4 809.2,330.6 807.4,330.5 805.7,330.3 804.5,330.0 803.6,329.5 803.4,329.0 803.7,328.5 804.6,328.0 805.9,327.6" fill="#465b78" stroke="#35588f" stroke-width="0.8"/>
<polygon points="797.6,318.3 799.5,318.2 801.3,318.2 802.9,318.4 804.2,318.7 805.0,319.2 805.2,319.7 804.9,320.2 804.1,320.7 802.7,321.1 801.1,321.4 799.3,321.5 797.4,321.5 795.8,321.3 794.5,321.0 793.7,320.5 793.5,320.0 793.8,319.5 794.7,319.0 796.0,318.6" fill="#465b78" stroke="#35588f" stroke-width="0.8"/>
<polygon points="787.9,309.5 789.7,309.3 791.5,309.4 793.1,309.6 794.4,309.9 795.2,310.3 795.4,310.8 795.1,311.3 794.2,311.8 792.9,312.2 791.3,312.5 789.5,312.7 787.7,312.6 786.0,312.4 784.8,312.1 784.0,311.7 783.7,311.2 784.1,310.6 784.9,310.1 786.2,309.7" fill="#465b78" stroke="#35588f" stroke-width="0.8"/>
<polygon points="778.3,300.8 780.1,300.7 781.9,300.7 783.5,300.9 784.7,301.2 785.5,301.6 785.7,302.1 785.4,302.6 784.6,303.1 783.3,303.5 781.6,303.8 779.8,303.9 778.0,303.9 776.4,303.7 775.2,303.4 774.4,302.9 774.2,302.5 774.5,301.9 775.4,301.5 776.7,301.1" fill="#465b78" stroke="#35588f" stroke-width="0.8"/>
<polygon points="768.9,292.3 770.7,292.1 772.4,292.2 774.0,292.4 775.2,292.7 776.0,293.1 776.2,293.6 775.9,294.1 775.1,294.6 773.8,295.0 772.1,295.2 770.4,295.3 768.6,295.3 767.0,295.1 765.8,294.8 765.0,294.4 764.8,293.9 765.1,293.4 766.0,292.9 767.3,292.5" fill="#465b78" stroke="#35588f" stroke-width="0.8"/>
<polygon points="759.6,283.9 761.4,283.8 763.1,283.8 764.7,284.0 765.9,284.3 766.7,284.7 766.9,285.2 766.6,285.7 765.7,286.1 764.4,286.5 762.8,286.8 761.1,286.9 759.3,286.9 757.7,286.7 756.5,286.4 755.7,286.0 755.5,285.5 755.8,285.0 756.7,284.5 758.0,284.2" fill="#465b78" stroke="#35588f" stroke-width="0.8"/>
<polygon points="750.5,275.6 752.2,275.5 754.0,275.6 755.5,275.7 756.7,276.0 757.5,276.4 757.7,276.9 757.4,277.4 756.5,277.9 755.3,278.2 753.7,278.5 751.9,278.6 750.2,278.6 748.6,278.4 747.4,278.1 746.6,277.7 746.4,277.2 746.8,276.7 747.6,276.3 748.9,275.9" fill="#465b78" stroke="#35588f" stroke-width="0.8"/>
<polygon points="741.5,267.5 743.3,267.4 745.0,267.4 746.5,267.6 747.7,267.9 748.5,268.3 748.7,268.8 748.4,269.3 747.5,269.7 746.2,270.1 744.6,270.3 742.9,270.5 741.2,270.4 739.6,270.3 738.4,270.0 737.7,269.6 737.5,269.1 737.8,268.6 738.7,268.2 739.9,267.8" fill="#465b78" stroke="#35588f" stroke-width="0.8"/>
<polygon points="732.7,259.6 734.4,259.4 736.1,259.5 737.7,259.6 738.9,259.9 739.6,260.3 739.8,260.8 739.5,261.3 738.6,261.7 737.4,262.1 735.8,262.3 734.0,262.4 732.3,262.4 730.8,262.2 729.6,261.9 728.9,261.5 728.7,261.1 729.0,260.6 729.9,260.2 731.1,259.8" fill="#465b78" stroke="#35588f" stroke-width="0.8"/>
<polygon points="724.0,251.7 725.8,251.6 727.4,251.6 729.0,251.8 730.1,252.1 730.9,252.5 731.1,252.9 730.7,253.4 729.9,253.8 728.6,254.2 727.1,254.4 725.3,254.6 723.6,254.5 722.1,254.4 721.0,254.1 720.2,253.7 720.0,253.2 720.4,252.8 721.2,252.3 722.5,252.0" fill="#465b78" stroke="#35588f" stroke-width="0.8"/>
<polygon points="715.5,244.0 717.2,243.9 718.9,243.9 720.4,244.1 721.5,244.4 722.3,244.8 722.5,245.2 722.1,245.7 721.3,246.1 720.0,246.4 718.5,246.7 716.8,246.8 715.1,246.8 713.6,246.6 712.4,246.3 711.7,245.9 711.5,245.5 711.9,245.0 712.7,244.6 714.0,244.2" fill="#465b78" stroke="#35588f" stroke-width="0.8"/>
<polygon points="707.1,236.4 708.8,236.3 710.5,236.3 711.9,236.5 713.1,236.8 713.8,237.1 714.0,237.6 713.7,238.0 712.8,238.4 711.6,238.8 710.0,239.0 708.3,239.1 706.7,239.1 705.2,239.0 704.0,238.7 703.3,238.3 703.1,237.9 703.5,237.4 704.3,237.0 705.6,236.6" fill="#465b78" stroke="#35588f" stroke-width="0.8"/>
<polygon points="698.8,228.9 700.5,228.8 702.2,228.8 703.6,229.0 704.8,229.3 705.5,229.7 705.7,230.1 705.3,230.5 704.5,230.9 703.3,231.3 701.7,231.5 700.0,231.6 698.4,231.6 696.9,231.4 695.8,231.2 695.1,230.8 694.9,230.4 695.2,229.9 696.1,229.5 697.3,229.2" fill="#465b78" stroke="#35588f" stroke-width="0.8"/>
<polygon points="690.7,221.6 692.4,221.5 694.0,221.5 695.5,221.6 696.6,221.9 697.3,222.3 697.5,222.7 697.1,223.1 696.3,223.6 695.1,223.9 693.5,224.1 691.9,224.2 690.2,224.2 688.8,224.0 687.6,223.8 687.0,223.4 686.8,223.0 687.1,222.5 687.9,222.1 689.2,221.8" fill="#465b78" stroke="#35588f" stroke-width="0.8"/>
<polygon points="682.7,214.3 684.4,214.2 686.0,214.2 687.4,214.4 688.5,214.7 689.2,215.0 689.4,215.5 689.1,215.9 688.2,216.3 687.0,216.6 685.5,216.8 683.8,216.9 682.2,216.9 680.8,216.8 679.6,216.5 679.0,216.1 678.8,215.7 679.1,215.3 680.0,214.9 681.2,214.6" fill="#465b78" stroke="#35588f" stroke-width="0.8"/>
<polygon points="674.8,207.2 676.5,207.1 678.1,207.1 679.5,207.3 680.6,207.5 681.3,207.9 681.5,208.3 681.1,208.7 680.3,209.1 679.1,209.4 677.6,209.7 675.9,209.8 674.3,209.7 672.9,209.6 671.8,209.3 671.1,209.0 670.9,208.6 671.3,208.1 672.1,207.7 673.3,207.4" fill="#465b78" stroke="#35588f" stroke-width="0.8"/>
<polygon points="667.1,200.2 668.7,200.1 670.3,200.1 671.7,200.3 672.8,200.5 673.5,200.9 673.6,201.3 673.3,201.7 672.5,202.1 671.2,202.4 669.7,202.6 668.1,202.7 666.5,202.7 665.1,202.5 664.0,202.3 663.3,201.9 663.2,201.5 663.5,201.1 664.3,200.7 665.6,200.4" fill="#465b78" stroke="#35588f" stroke-width="0.8"/>
<polygon points="659.4,193.3 661.0,193.2 662.6,193.2 664.0,193.3 665.1,193.6 665.8,193.9 665.9,194.3 665.6,194.7 664.8,195.1 663.6,195.4 662.1,195.7 660.4,195.8 658.9,195.7 657.4,195.6 656.4,195.3 655.7,195.0 655.5,194.6 655.9,194.2 656.7,193.8 657.9,193.5" fill="#465b78" stroke="#35588f" stroke-width="0.8"/>
<polygon points="651.9,186.4 653.5,186.3 655.1,186.4 656.5,186.5 657.5,186.8 658.2,187.1 658.3,187.5 658.0,187.9 657.2,188.3 656.0,188.6 654.5,188.8 652.9,188.9 651.3,188.9 649.9,188.7 648.8,188.5 648.2,188.1 648.0,187.7 648.4,187.3 649.2,187.0 650.4,186.7" fill="#465b78" stroke="#35588f" stroke-width="0.8"/>
<polygon points="644.5,179.7 646.1,179.6 647.6,179.7 649.0,179.8 650.1,180.1 650.7,180.4 650.9,180.8 650.5,181.2 649.7,181.5 648.5,181.9 647.0,182.1 645.4,182.2 643.9,182.1 642.5,182.0 641.4,181.7 640.8,181.4 640.6,181.0 641.0,180.6 641.8,180.3 643.0,180.0" fill="#465b78" stroke="#35588f" stroke-width="0.8"/>
<polygon points="637.2,173.1 638.7,173.0 640.3,173.1 641.7,173.2 642.7,173.5 643.4,173.8 643.5,174.2 643.2,174.6 642.4,174.9 641.2,175.2 639.7,175.4 638.1,175.5 636.6,175.5 635.2,175.3 634.1,175.1 633.5,174.8 633.3,174.4 633.7,174.0 634.5,173.6 635.7,173.3" fill="#465b78" stroke="#35588f" stroke-width="0.8"/>
<polygon points="630.0,166.6 631.5,166.5 633.1,166.6 634.4,166.7 635.5,166.9 636.1,167.3 636.3,167.6 635.9,168.0 635.1,168.4 633.9,168.7 632.5,168.9 630.9,169.0 629.3,168.9 628.0,168.8 626.9,168.6 626.3,168.2 626.2,167.9 626.5,167.5 627.3,167.1 628.5,166.8" fill="#465b78" stroke="#35588f" stroke-width="0.8"/>
<polygon points="622.9,160.2 624.4,160.1 626.0,160.1 627.3,160.3 628.3,160.5 629.0,160.8 629.1,161.2 628.8,161.6 628.0,161.9 626.8,162.2 625.3,162.4 623.8,162.5 622.2,162.5 620.9,162.4 619.8,162.1 619.2,161.8 619.1,161.4 619.4,161.0 620.2,160.7 621.4,160.4" fill="#465b78" stroke="#35588f" stroke-width="0.8"/>
<polygon points="615.9,153.9 617.4,153.8 619.0,153.8 620.3,154.0 621.3,154.2 621.9,154.5 622.1,154.9 621.7,155.2 620.9,155.6 619.7,155.9 618.3,156.1 616.7,156.2 615.2,156.1 613.9,156.0 612.9,155.8 612.3,155.4 612.1,155.1 612.5,154.7 613.3,154.4 614.4,154.1" fill="#465b78" stroke="#35588f" stroke-width="0.8"/>
<polygon points="609.0,147.7 610.5,147.6 612.0,147.6 613.4,147.7 614.4,148.0 615.0,148.3 615.1,148.6 614.8,149.0 614.0,149.3 612.8,149.6 611.4,149.8 609.8,149.9 608.3,149.9 607.0,149.7 606.0,149.5 605.4,149.2 605.2,148.8 605.6,148.5 606.4,148.1 607.6,147.8" fill="#465b78" stroke="#35588f" stroke-width="0.8"/>
<polygon points="602.2,141.5 603.7,141.4 605.2,141.4 606.5,141.6 607.6,141.8 608.2,142.1 608.3,142.5 607.9,142.8 607.1,143.2 606.0,143.4 604.6,143.6 603.0,143.7 601.5,143.7 600.2,143.6 599.2,143.3 598.6,143.0 598.5,142.7 598.8,142.3 599.6,142.0 600.8,141.7" fill="#465b78" stroke="#35588f" stroke-width="0.8"/>
<polygon points="595.5,135.5 597.0,135.4 598.5,135.4 599.8,135.5 600.8,135.8 601.4,136.1 601.5,136.4 601.2,136.8 600.4,137.1 599.2,137.4 597.8,137.6 596.3,137.6 594.8,137.6 593.5,137.5 592.5,137.3 591.9,137.0 591.8,136.6 592.2,136.3 592.9,135.9 594.1,135.6" fill="#465b78" stroke="#35588f" stroke-width="0.8"/>
<polygon points="588.9,129.5 590.4,129.4 591.9,129.4 593.2,129.6 594.2,129.8 594.8,130.1 594.9,130.4 594.5,130.8 593.8,131.1 592.6,131.4 591.2,131.6 589.7,131.6 588.2,131.6 586.9,131.5 585.9,131.3 585.3,131.0 585.2,130.6 585.6,130.3 586.4,129.9 587.5,129.7" fill="#465b78" stroke="#35588f" stroke-width="0.8"/>
<polygon points="582.4,123.6 583.9,123.5 585.4,123.5 586.7,123.7 587.6,123.9 588.2,124.2 588.3,124.5 588.0,124.9 587.2,125.2 586.1,125.5 584.7,125.6 583.2,125.7 581.7,125.7 580.4,125.6 579.4,125.4 578.8,125.1 578.7,124.7 579.1,124.4 579.9,124.1 581.0,123.8" fill="#465b78" stroke="#35588f" stroke-width="0.8"/>
<polygon points="576.0,117.8 577.5,117.7 578.9,117.7 580.2,117.9 581.2,118.1 581.8,118.4 581.9,118.7 581.5,119.1 580.7,119.4 579.6,119.6 578.2,119.8 576.7,119.9 575.3,119.9 574.0,119.8 573.0,119.5 572.4,119.2 572.3,118.9 572.7,118.6 573.5,118.2 574.6,118.0" fill="#465b78" stroke="#35588f" stroke-width="0.8"/>
<polygon points="569.7,112.1 571.2,112.0 572.6,112.0 573.9,112.2 574.8,112.4 575.4,112.7 575.5,113.0 575.2,113.3 574.4,113.6 573.2,113.9 571.9,114.1 570.4,114.2 568.9,114.1 567.7,114.0 566.7,113.8 566.1,113.5 566.0,113.2 566.4,112.8 567.2,112.5 568.3,112.3" fill="#465b78" stroke="#35588f" stroke-width="0.8"/>
<polygon points="563.4,106.4 564.9,106.4 566.3,106.4 567.6,106.5 568.5,106.7 569.1,107.0 569.2,107.3 568.9,107.7 568.1,108.0 567.0,108.2 565.6,108.4 564.1,108.5 562.7,108.5 561.4,108.3 560.5,108.1 559.9,107.8 559.8,107.5 560.2,107.2 560.9,106.9 562.1,106.6" fill="#465b78" stroke="#35588f" stroke-width="0.8"/>
<polygon points="557.3,100.9 558.7,100.8 560.2,100.8 561.4,100.9 562.4,101.2 562.9,101.4 563.0,101.7 562.7,102.1 561.9,102.4 560.8,102.6 559.4,102.8 557.9,102.9 556.5,102.9 555.3,102.7 554.3,102.5 553.8,102.3 553.7,101.9 554.0,101.6 554.8,101.3 555.9,101.1" fill="#465b78" stroke="#35588f" stroke-width="0.8"/>
<polygon points="551.2,95.4 552.7,95.3 554.1,95.3 555.3,95.5 556.3,95.7 556.8,95.9 556.9,96.2 556.6,96.6 555.8,96.9 554.7,97.1 553.3,97.3 551.9,97.4 550.4,97.3 549.2,97.2 548.3,97.0 547.7,96.7 547.6,96.4 548.0,96.1 548.7,95.8 549.9,95.6" fill="#465b78" stroke="#35588f" stroke-width="0.8"/>
<polygon points="545.2,90.0 546.7,89.9 548.1,89.9 549.3,90.0 550.2,90.2 550.8,90.5 550.9,90.8 550.5,91.1 549.8,91.4 548.6,91.7 547.3,91.8 545.8,91.9 544.4,91.9 543.2,91.8 542.3,91.6 541.7,91.3 541.6,91.0 542.0,90.7 542.8,90.4 543.9,90.1" fill="#465b78" stroke="#35588f" stroke-width="0.8"/>
<polygon points="539.3,84.6 540.7,84.6 542.1,84.6 543.4,84.7 544.3,84.9 544.8,85.2 544.9,85.5 544.6,85.8 543.8,86.1 542.7,86.3 541.4,86.5 539.9,86.6 538.5,86.5 537.3,86.4 536.4,86.2 535.8,85.9 535.7,85.6 536.1,85.3 536.9,85.0 538.0,84.8" fill="#465b78" stroke="#35588f" stroke-width="0.8"/>
<polygon points="533.5,79.4 534.9,79.3 536.3,79.3 537.5,79.4 538.4,79.6 539.0,79.9 539.0,80.2 538.7,80.5 537.9,80.8 536.8,81.0 535.5,81.2 534.1,81.3 532.7,81.2 531.5,81.1 530.6,80.9 530.0,80.7 529.9,80.4 530.3,80.0 531.1,79.8 532.2,79.5" fill="#465b78" stroke="#35588f" stroke-width="0.8"/>
<polygon points="527.7,74.2 529.1,74.1 530.5,74.1 531.7,74.2 532.6,74.4 533.2,74.7 533.3,75.0 532.9,75.3 532.1,75.6 531.0,75.8 529.7,76.0 528.3,76.0 526.9,76.0 525.7,75.9 524.8,75.7 524.3,75.4 524.2,75.1 524.6,74.8 525.3,74.5 526.4,74.3" fill="#465b78" stroke="#35588f" stroke-width="0.8"/>
<polygon points="522.1,69.0 523.5,68.9 524.8,69.0 526.0,69.1 526.9,69.3 527.4,69.5 527.5,69.8 527.2,70.1 526.4,70.4 525.3,70.6 524.0,70.8 522.6,70.9 521.2,70.9 520.0,70.7 519.1,70.5 518.6,70.3 518.5,70.0 518.9,69.7 519.7,69.4 520.7,69.2" fill="#465b78" stroke="#35588f" stroke-width="0.8"/>
<polygon points="516.5,63.9 517.9,63.9 519.2,63.9 520.4,64.0 521.3,64.2 521.8,64.5 521.9,64.7 521.5,65.0 520.8,65.3 519.7,65.5 518.4,65.7 517.0,65.8 515.6,65.8 514.4,65.6 513.6,65.5 513.0,65.2 513.0,64.9 513.3,64.6 514.1,64.3 515.1,64.1" fill="#465b78" stroke="#35588f" stroke-width="0.8"/>
<polygon points="510.9,58.9 512.3,58.9 513.7,58.9 514.8,59.0 515.7,59.2 516.2,59.4 516.3,59.7 516.0,60.0 515.2,60.3 514.1,60.5 512.8,60.7 511.4,60.8 510.1,60.7 508.9,60.6 508.0,60.4 507.5,60.2 507.4,59.9 507.8,59.6 508.5,59.3 509.6,59.1" fill="#465b78" stroke="#35588f" stroke-width="0.8"/>
<polygon points="505.5,54.0 506.8,53.9 508.2,54.0 509.4,54.1 510.2,54.3 510.7,54.5 510.8,54.8 510.5,55.1 509.7,55.3 508.7,55.6 507.4,55.7 506.0,55.8 504.6,55.8 503.5,55.7 502.6,55.5 502.1,55.2 502.0,54.9 502.3,54.7 503.1,54.4 504.2,54.2" fill="#465b78" stroke="#35588f" stroke-width="0.8"/>
<polygon points="500.1,49.1 501.5,49.1 502.8,49.1 503.9,49.2 504.8,49.4 505.3,49.6 505.4,49.9 505.0,50.2 504.3,50.5 503.2,50.7 501.9,50.8 500.6,50.9 499.2,50.9 498.1,50.8 497.2,50.6 496.7,50.3 496.6,50.1 497.0,49.8 497.7,49.5 498.8,49.3" fill="#465b78" stroke="#35588f" stroke-width="0.8"/>
<polygon points="494.8,44.3 496.1,44.3 497.4,44.3 498.6,44.4 499.5,44.6 500.0,44.8 500.0,45.1 499.7,45.4 498.9,45.6 497.9,45.8 496.6,46.0 495.2,46.1 493.9,46.0 492.8,45.9 491.9,45.8 491.4,45.5 491.3,45.2 491.7,45.0 492.4,44.7 493.5,44.5" fill="#465b78" stroke="#35588f" stroke-width="0.8"/>
<polygon points="489.5,39.6 490.9,39.5 492.2,39.5 493.3,39.6 494.2,39.8 494.7,40.0 494.7,40.3 494.4,40.6 493.7,40.9 492.6,41.1 491.3,41.2 490.0,41.3 488.6,41.3 487.5,41.2 486.6,41.0 486.2,40.7 486.1,40.5 486.4,40.2 487.2,39.9 488.2,39.7" fill="#465b78" stroke="#35588f" stroke-width="0.8"/>
<polygon points="484.3,34.9 485.7,34.8 487.0,34.8 488.1,34.9 489.0,35.1 489.4,35.4 489.5,35.6 489.2,35.9 488.4,36.2 487.4,36.4 486.1,36.5 484.8,36.6 483.4,36.6 482.3,36.5 481.5,36.3 481.0,36.0 480.9,35.8 481.3,35.5 482.0,35.2 483.1,35.0" fill="#465b78" stroke="#35588f" stroke-width="0.8"/>
<polygon points="479.2,30.2 480.5,30.2 481.8,30.2 483.0,30.3 483.8,30.5 484.3,30.7 484.4,31.0 484.0,31.2 483.3,31.5 482.2,31.7 481.0,31.9 479.6,31.9 478.3,31.9 477.2,31.8 476.3,31.6 475.9,31.4 475.8,31.1 476.2,30.9 476.9,30.6 477.9,30.4" fill="#465b78" stroke="#35588f" stroke-width="0.8"/>
<polygon points="474.1,25.7 475.5,25.6 476.8,25.6 477.9,25.7 478.7,25.9 479.2,26.1 479.3,26.4 478.9,26.7 478.2,26.9 477.1,27.1 475.9,27.3 474.5,27.3 473.3,27.3 472.1,27.2 471.3,27.0 470.8,26.8 470.8,26.5 471.1,26.3 471.8,26.0 472.9,25.8" fill="#465b78" stroke="#35588f" stroke-width="0.8"/>
<polygon points="469.1,21.2 470.5,21.1 471.7,21.1 472.9,21.2 473.7,21.4 474.2,21.6 474.2,21.9 473.9,22.1 473.2,22.4 472.1,22.6 470.9,22.7 469.5,22.8 468.3,22.8 467.1,22.7 466.3,22.5 465.8,22.3 465.8,22.0 466.1,21.7 466.9,21.5 467.9,21.3" fill="#465b78" stroke="#35588f" stroke-width="0.8"/>
<polygon points="464.2,16.7 465.5,16.6 466.8,16.6 467.9,16.7 468.7,16.9 469.2,17.1 469.3,17.4 468.9,17.7 468.2,17.9 467.2,18.1 465.9,18.2 464.6,18.3 463.3,18.3 462.2,18.2 461.4,18.0 460.9,17.8 460.9,17.5 461.2,17.3 461.9,17.0 463.0,16.8" fill="#465b78" stroke="#35588f" stroke-width="0.8"/>
<polygon points="459.3,12.3 460.6,12.2 461.9,12.2 463.0,12.3 463.8,12.5 464.3,12.7 464.3,13.0 464.0,13.2 463.3,13.5 462.2,13.7 461.0,13.8 459.7,13.9 458.4,13.9 457.3,13.8 456.5,13.6 456.0,13.4 456.0,13.1 456.3,12.9 457.1,12.6 458.1,12.4" fill="#465b78" stroke="#35588f" stroke-width="0.8"/>
<polygon points="1452.1,962.7 1452.2,965.2 1452.6,967.9 1453.4,970.6 1454.4,973.0 1455.5,975.1 1456.8,976.6 1458.1,977.5 1459.4,977.7 1460.4,977.2 1461.3,976.1 1461.9,974.3 1462.1,972.1 1462.0,969.5 1461.5,966.8 1460.8,964.1 1459.8,961.7 1458.6,959.6 1457.3,958.1 1456.0,957.2 1454.8,957.0 1453.7,957.5 1452.8,958.7 1452.3,960.5" fill="#5c6457" stroke="#4b5449" stroke-width="1.1"/>
<polygon points="1455.3,966.4 1455.4,968.7 1455.7,971.0 1456.1,973.3 1456.8,975.3 1457.6,976.9 1458.4,978.0 1459.3,978.5 1460.1,978.4 1460.8,977.7 1461.4,976.4 1461.8,974.7 1462.0,972.6 1461.9,970.2 1461.6,967.9 1461.1,965.6 1460.5,963.6 1459.7,962.0 1458.9,960.9 1458.0,960.4 1457.2,960.5 1456.5,961.2 1455.9,962.5 1455.5,964.3" fill="#fafaf8"/>
<polygon points="1486.8,995.1 1486.9,997.7 1487.3,1000.4 1488.1,1003.2 1489.1,1005.6 1490.3,1007.8 1491.7,1009.3 1493.0,1010.3 1494.3,1010.5 1495.5,1010.1 1496.4,1008.9 1496.9,1007.1 1497.2,1004.8 1497.1,1002.2 1496.7,999.5 1495.9,996.8 1494.8,994.2 1493.6,992.1 1492.3,990.6 1490.9,989.6 1489.6,989.4 1488.5,989.9 1487.6,991.1 1487.0,992.8" fill="#5c6457" stroke="#4b5449" stroke-width="1.1"/>
<polygon points="1490.2,998.9 1490.2,1001.2 1490.5,1003.6 1491.0,1005.9 1491.6,1008.0 1492.4,1009.6 1493.3,1010.8 1494.2,1011.3 1495.1,1011.2 1495.8,1010.5 1496.5,1009.2 1496.9,1007.5 1497.1,1005.3 1497.0,1003.0 1496.7,1000.6 1496.2,998.3 1495.6,996.2 1494.8,994.6 1493.9,993.5 1493.0,992.9 1492.1,993.0 1491.4,993.7 1490.8,995.0 1490.3,996.8" fill="#fafaf8"/>
<polygon points="1216.2,742.5 1216.4,744.7 1216.8,747.1 1217.4,749.4 1218.2,751.4 1219.1,753.1 1220.1,754.3 1221.1,754.9 1222.0,754.9 1222.7,754.4 1223.3,753.2 1223.7,751.6 1223.8,749.5 1223.7,747.3 1223.3,744.9 1222.6,742.6 1221.8,740.6 1220.9,738.9 1219.9,737.7 1219.0,737.1 1218.1,737.0 1217.3,737.6 1216.7,738.8 1216.4,740.4" fill="#5c6457" stroke="#4b5449" stroke-width="1.1"/>
<polygon points="1218.7,745.3 1218.8,747.4 1219.1,749.4 1219.5,751.4 1220.0,753.1 1220.6,754.4 1221.3,755.3 1221.9,755.6 1222.5,755.4 1223.0,754.7 1223.4,753.5 1223.6,751.9 1223.7,750.0 1223.6,747.9 1223.3,745.9 1222.9,743.9 1222.4,742.2 1221.8,740.9 1221.2,740.0 1220.5,739.7 1219.9,739.9 1219.4,740.6 1219.0,741.8 1218.8,743.4" fill="#fafaf8"/>
<polygon points="1246.0,770.3 1246.2,772.6 1246.6,775.0 1247.2,777.3 1248.0,779.4 1249.0,781.1 1250.0,782.4 1251.0,783.0 1251.9,783.1 1252.8,782.5 1253.4,781.3 1253.8,779.7 1253.9,777.6 1253.7,775.3 1253.3,772.9 1252.7,770.6 1251.9,768.5 1250.9,766.8 1249.9,765.5 1248.9,764.9 1248.0,764.8 1247.2,765.4 1246.5,766.6 1246.2,768.2" fill="#5c6457" stroke="#4b5449" stroke-width="1.1"/>
<polygon points="1248.6,773.2 1248.7,775.3 1249.0,777.4 1249.4,779.4 1249.9,781.2 1250.6,782.5 1251.2,783.4 1251.9,783.8 1252.5,783.6 1253.0,782.9 1253.5,781.6 1253.7,780.0 1253.8,778.1 1253.7,776.0 1253.4,773.9 1253.0,771.9 1252.5,770.2 1251.8,768.8 1251.2,767.9 1250.5,767.5 1249.9,767.7 1249.3,768.5 1248.9,769.7 1248.7,771.3" fill="#fafaf8"/>
<polygon points="844.2,395.1 844.4,396.8 844.7,398.6 845.1,400.3 845.6,401.8 846.2,402.9 846.8,403.7 847.3,404.0 847.8,403.8 848.2,403.2 848.5,402.2 848.6,400.8 848.6,399.1 848.4,397.4 848.1,395.5 847.7,393.9 847.2,392.4 846.6,391.2 846.0,390.5 845.5,390.2 845.0,390.3 844.6,391.0 844.3,392.0 844.2,393.4" fill="#5c6457" stroke="#4b5449" stroke-width="1.1"/>
<polygon points="845.7,396.8 845.8,398.4 846.0,400.0 846.3,401.5 846.7,402.8 847.1,403.7 847.5,404.3 847.8,404.4 848.1,404.1 848.4,403.4 848.5,402.4 848.6,401.1 848.6,399.5 848.4,397.9 848.2,396.3 847.9,394.8 847.5,393.6 847.1,392.6 846.8,392.1 846.4,391.9 846.1,392.2 845.8,392.9 845.7,394.0 845.6,395.3" fill="#fafaf8"/>
<polygon points="859.7,409.6 859.9,411.4 860.2,413.2 860.7,414.9 861.2,416.4 861.8,417.6 862.3,418.3 862.9,418.6 863.4,418.5 863.8,417.9 864.1,416.8 864.2,415.4 864.2,413.7 864.0,411.9 863.7,410.1 863.3,408.4 862.8,406.9 862.2,405.7 861.6,405.0 861.0,404.6 860.5,404.8 860.1,405.4 859.8,406.5 859.7,407.9" fill="#5c6457" stroke="#4b5449" stroke-width="1.1"/>
<polygon points="861.2,411.4 861.4,413.0 861.6,414.6 861.9,416.1 862.3,417.4 862.7,418.3 863.1,418.9 863.4,419.0 863.7,418.8 864.0,418.1 864.2,417.0 864.2,415.7 864.2,414.1 864.1,412.5 863.8,410.9 863.5,409.4 863.2,408.1 862.8,407.2 862.4,406.6 862.0,406.4 861.7,406.7 861.4,407.4 861.3,408.5 861.2,409.8" fill="#fafaf8"/>
<polygon points="552.3,122.5 552.5,123.8 552.7,125.2 553.0,126.4 553.3,127.5 553.7,128.3 554.0,128.8 554.3,128.9 554.6,128.7 554.8,128.1 554.9,127.2 554.9,126.1 554.8,124.8 554.6,123.4 554.4,122.0 554.1,120.8 553.7,119.7 553.4,118.9 553.1,118.5 552.8,118.3 552.5,118.6 552.3,119.2 552.2,120.0 552.2,121.2" fill="#5c6457" stroke="#4b5449" stroke-width="1.1"/>
<polygon points="561.1,130.7 561.3,132.1 561.5,133.5 561.8,134.7 562.2,135.8 562.5,136.6 562.9,137.1 563.2,137.2 563.4,137.0 563.6,136.4 563.7,135.5 563.7,134.4 563.6,133.0 563.5,131.7 563.2,130.3 562.9,129.0 562.6,127.9 562.2,127.1 561.9,126.7 561.6,126.5 561.3,126.8 561.1,127.4 561.0,128.3 561.0,129.4" fill="#5c6457" stroke="#4b5449" stroke-width="1.1"/>
<polygon points="666.7,230.0 666.9,231.2 667.1,232.4 667.3,233.4 667.6,234.4 668.0,235.1 668.3,235.5 668.6,235.7 668.8,235.5 669.0,235.0 669.2,234.3 669.2,233.4 669.1,232.3 669.0,231.1 668.8,229.9 668.5,228.8 668.2,227.9 667.9,227.2 667.6,226.7 667.3,226.6 667.0,226.8 666.8,227.2 666.7,228.0 666.7,228.9" fill="#5c6457" stroke="#4b5449" stroke-width="1.1"/>
<polygon points="677.8,240.3 677.9,241.5 678.1,242.7 678.4,243.8 678.7,244.7 679.0,245.5 679.3,245.9 679.6,246.1 679.9,245.9 680.1,245.4 680.2,244.7 680.3,243.7 680.2,242.6 680.1,241.4 679.9,240.3 679.6,239.2 679.3,238.2 679.0,237.5 678.6,237.0 678.3,236.9 678.1,237.1 677.9,237.5 677.8,238.3 677.7,239.2" fill="#5c6457" stroke="#4b5449" stroke-width="1.1"/>
<polygon points="688.8,250.6 688.9,251.8 689.1,253.0 689.4,254.1 689.7,255.1 690.1,255.8 690.4,256.3 690.7,256.4 691.0,256.3 691.2,255.8 691.3,255.1 691.3,254.1 691.3,253.0 691.2,251.8 691.0,250.6 690.7,249.5 690.4,248.5 690.0,247.8 689.7,247.3 689.4,247.2 689.1,247.3 688.9,247.8 688.8,248.5 688.7,249.5" fill="#5c6457" stroke="#4b5449" stroke-width="1.1"/>
<polygon points="701.0,262.0 701.1,263.2 701.3,264.4 701.6,265.5 701.9,266.5 702.2,267.2 702.6,267.7 702.9,267.9 703.2,267.7 703.4,267.2 703.5,266.5 703.6,265.5 703.5,264.4 703.4,263.2 703.2,262.0 702.9,260.8 702.6,259.9 702.2,259.1 701.9,258.7 701.6,258.5 701.3,258.7 701.1,259.2 701.0,259.9 700.9,260.9" fill="#5c6457" stroke="#4b5449" stroke-width="1.1"/>
<polygon points="653.8,199.0 655.0,212.8 655.0,212.8 655.2,214.9 655.6,217.0 656.2,219.2 656.9,221.2 657.8,223.2 658.7,224.9 659.6,226.3 660.6,227.4 661.5,228.0 662.3,228.3 663.1,228.2 663.7,227.6 664.2,226.6 664.5,225.3 664.6,223.6 664.5,221.7 664.5,221.7 663.4,207.7" fill="#fafaf8" stroke="#4b5449" stroke-width="1.2"/>
<polygon points="653.8,199.0 655.0,212.8 655.0,212.8 655.2,214.9 655.6,217.0 656.2,219.2 656.9,221.2 657.8,223.2 658.7,224.9 659.6,226.3 660.6,227.4 661.6,227.6 660.6,226.6 659.7,225.2 658.8,223.6 658.0,221.7 657.3,219.7 656.7,217.7 656.3,215.7 656.0,213.8 656.0,213.8 654.9,200.0" fill="#737a6c"/>
<polygon points="706.7,247.4 707.8,261.9 707.8,261.9 708.1,264.0 708.5,266.3 709.1,268.6 709.9,270.8 710.8,272.8 711.8,274.7 712.8,276.2 713.9,277.4 714.9,278.1 715.9,278.5 716.7,278.4 717.4,277.8 718.0,276.8 718.3,275.4 718.5,273.7 718.5,271.7 718.5,271.7 717.4,257.1" fill="#fafaf8" stroke="#4b5449" stroke-width="1.2"/>
<polygon points="706.7,247.4 707.8,261.9 707.8,261.9 708.1,264.0 708.5,266.3 709.1,268.6 709.9,270.8 710.8,272.8 711.8,274.7 712.8,276.2 713.9,277.4 715.0,277.7 714.0,276.6 712.9,275.1 712.0,273.3 711.1,271.3 710.3,269.2 709.7,267.1 709.3,265.0 709.0,263.0 709.0,263.0 707.9,248.5" fill="#737a6c"/></svg><svg width="1983" height="1441" viewBox="332 17 1983 1441" style="position:absolute;left:0;top:0" font-family="Liberation Sans, sans-serif">
<g transform="translate(1130,30) scale(0.11732)" stroke="#262626" stroke-width="18" fill="#fff" stroke-linejoin="round">
<path d="M160,128 L148,272 L298,268 L272,232 C300,205 360,205 385,262 C400,300 385,335 368,352 L430,416 C475,370 500,300 480,230 C455,140 370,100 290,112 C250,118 215,135 195,160 Z"/>
<path d="M805,405 C760,350 750,270 775,215 C810,140 880,110 950,122 C975,127 990,137 1003,150 L1083,140 L1083,268 L955,268 L990,226 C945,195 885,205 855,250 C832,290 838,325 862,352 Z" fill="#999" stroke="#999" stroke-width="6"/>
<path d="M1385,240 L1460,240 L1490,268 L1460,300 L1385,300 Z"/>
<path d="M1468,232 L1585,108 L1612,135 L1495,258 Z" fill="#333"/>
<path d="M1472,302 L1498,276 L1612,395 L1582,422 Z"/>
<path d="M1640,168 L1690,215 L1668,240 L1700,300 L1668,330 L1690,350 L1640,368 L1612,330 L1632,300 L1598,270 L1625,240 L1600,205 Z" stroke-width="14"/>
<path d="M2085,108 L2185,108 L2185,240 L2230,240 L2138,345 L2047,240 L2085,240 Z"/>
<rect x="1955" y="362" width="362" height="76" />
<rect x="1955" y="402" width="362" height="38" fill="#333"/>
</g>
<g transform="translate(1415,30) scale(0.11732)" stroke="#262626" stroke-width="18" fill="#fff" stroke-linejoin="round">
<rect x="133" y="93" width="195" height="195" fill="#fff" stroke="#6a6a6a" stroke-width="22"/>
<rect x="122" y="82" width="217" height="217" fill="none" stroke="#333" stroke-width="6" rx="8"/>
<path d="M388,372 L420,340 L492,408 L455,448 Z"/>
<circle cx="330" cy="288" r="112"/>
<circle cx="330" cy="288" r="78"/>
<path d="M270,262 L320,262 L320,215" fill="none" stroke="#555" stroke-width="10"/>
<path d="M965,350 L1005,310 L1102,405 L1050,455 Z"/>
<circle cx="880" cy="235" r="148"/>
<circle cx="880" cy="235" r="103"/>
<rect x="1298" y="52" width="437" height="438" fill="#f79b31" stroke="none"/>
<path d="M1517,82 L1585,150 L1565,172 L1535,150 L1535,252 L1640,252 L1618,222 L1640,202 L1708,270 L1640,338 L1618,318 L1640,288 L1535,288 L1535,390 L1565,368 L1585,390 L1517,458 L1449,390 L1469,368 L1499,390 L1499,288 L1394,288 L1416,318 L1394,338 L1326,270 L1394,202 L1416,222 L1394,252 L1499,252 L1499,150 L1469,172 L1449,150 Z" stroke-width="14"/>
<path d="M1985,100 L1945,245 L2085,248 L2095,208 L2068,200 C2100,160 2160,150 2205,175 C2265,210 2280,290 2240,345 C2195,400 2110,400 2065,355 C2048,338 2035,320 2028,300 L1975,320 C1990,365 2020,400 2062,422 C2140,462 2245,440 2290,365 C2340,280 2310,170 2225,122 C2150,82 2060,100 2010,160 L1990,150 Z"/>
</g>
<g transform="translate(1690,30) scale(0.06472)" stroke="#262626" stroke-width="29" fill="#fff" stroke-linejoin="round">
<path transform="translate(475,272) rotate(0)" d="M-97,-100 L48,-100 L95,-47 L45,-10 L107,53 L50,110 L-13,48 L-50,100 L-97,53 Z"/>
<path transform="translate(907,272) rotate(90)" d="M-97,-100 L48,-100 L95,-47 L45,-10 L107,53 L50,110 L-13,48 L-50,100 L-97,53 Z"/>
<path transform="translate(907,703) rotate(180)" d="M-97,-100 L48,-100 L95,-47 L45,-10 L107,53 L50,110 L-13,48 L-50,100 L-97,53 Z"/>
<path transform="translate(475,703) rotate(270)" d="M-97,-100 L48,-100 L95,-47 L45,-10 L107,53 L50,110 L-13,48 L-50,100 L-97,53 Z"/>
<path d="M1480,400 L1480,482 L1790,657 L2080,507 L2075,415 Z" fill="#151515" stroke="#151515"/>
<path d="M1740,237 L2073,415 L1790,573 L1482,400 Z" stroke-width="26"/>
<path d="M1750,345 L1955,455 L1790,548 L1595,440 Z" stroke-width="22"/>
</g>
<g>
<path d="M353.5,1400.5 L370,1391 L372.5,1403.5 Z" fill="#333"/>
<path d="M371,1394 L395,1390 L396.5,1396.5 L372,1400 Z" fill="#3a3a3a"/>
<path d="M399,1393 L403,1391 L409.5,1399 L404,1401.5 Z M402.5,1399 L411.5,1397.5 L415.8,1411.5 L403.2,1407.5 Z" fill="#333"/>
<circle cx="396.5" cy="1392.5" r="5.2" fill="#3a3a3a"/>
<rect x="394.3" y="1366" width="4.6" height="23" fill="#e02a0c"/>
<path d="M396.7,1349 L403.5,1367.5 L390,1367.5 Z" fill="#f03010"/>
<text x="398.5" y="1340.5" font-size="12" fill="#111">Z</text>
<text x="350.5" y="1396" font-size="12" fill="#111">X</text>
<text x="419.5" y="1407" font-size="12" fill="#111">Y</text>
</g>
<g transform="translate(1870,990) scale(0.17394)">
<path d="M795,710 L637,710 A158,158 0 0 0 792,868 Z" fill="#b9cfe2" stroke="#8aa7c8" stroke-width="4"/>
<path d="M818,862 L818,700 A165,165 0 0 1 985,862 Z" fill="#b9cfe2" stroke="#8aa7c8" stroke-width="4"/>
<path d="M1945,862 L1698,862 A247,240 0 0 1 1945,625 Z" fill="#b9cfe2" stroke="#8aa7c8" stroke-width="4"/>
<path d="M1945,368 L1795,368 A150,148 0 0 0 1945,515 Z" fill="#b9cfe2" stroke="#8aa7c8" stroke-width="4"/>
<line x1="940" y1="562" x2="725" y2="780" stroke="#869fc0" stroke-width="5.5"/>
<line x1="885" y1="800" x2="680" y2="1015" stroke="#869fc0" stroke-width="5.5"/>
<line x1="1845" y1="770" x2="2090" y2="1015" stroke="#869fc0" stroke-width="5.5"/>
<line x1="1880" y1="420" x2="2090" y2="225" stroke="#869fc0" stroke-width="5.5"/>
<line x1="618" y1="548" x2="618" y2="695" stroke="#222" stroke-width="6"/>
<line x1="1872" y1="260" x2="1872" y2="340" stroke="#222" stroke-width="6"/>
<line x1="440" y1="788" x2="790" y2="788" stroke="#222" stroke-width="6"/>
<path d="M432,695 L805,695 L805,875 L1958,875 L1958,355 L1787,355" fill="none" stroke="#383838" stroke-width="31" stroke-linejoin="miter" stroke-linecap="round"/>
<path d="M578,708 L658,708 L618,757 Z M1340,888 L1420,888 L1380,940 Z M1970,585 L1970,665 L2013,625 Z" fill="#383838"/>
<text x="468" y="515" font-size="155" fill="#1c1c1c" stroke="#1c1c1c" stroke-width="3">35,5</text>
<text x="103" y="865" font-size="155" fill="#1c1c1c" stroke="#1c1c1c" stroke-width="3">17,3</text>
<text x="1193" y="1105" font-size="155" fill="#1c1c1c" stroke="#1c1c1c" stroke-width="3">108,6</text>
<text x="2056" y="665" font-size="155" fill="#1c1c1c" stroke="#1c1c1c" stroke-width="3">49,8</text>
<text x="1728" y="227" font-size="155" fill="#1c1c1c" stroke="#1c1c1c" stroke-width="3">15,5</text>
<text x="928" y="522" font-size="137" fill="#1f4e8f" stroke="#1f4e8f" stroke-width="2">90°</text>
<text x="478" y="1147" font-size="137" fill="#1f4e8f" stroke="#1f4e8f" stroke-width="2">90°</text>
<text x="2078" y="1147" font-size="137" fill="#1f4e8f" stroke="#1f4e8f" stroke-width="2">90°</text>
<text x="2078" y="187" font-size="137" fill="#1f4e8f" stroke="#1f4e8f" stroke-width="2">90°</text>
</g>
</svg>
</div>
<!-- table -->
<table class="tb">
<colgroup><col style="width:64px"><col style="width:211px"><col style="width:188px"></colgroup>
<tr><th style="border-left:none"></th><th>Länge</th><th>Winkel</th></tr>
<tr class="s"><td class="k">a</td><td class="v">15,50 mm</td><td class="w">90,0°</td></tr>
<tr><td class="k">b</td><td class="v">49,80 mm</td><td class="w">90,0°</td></tr>
<tr><td class="k">c</td><td class="v">108,60 mm</td><td class="w">90,0°</td></tr>
<tr><td class="k">d</td><td class="v">17,30 mm</td><td class="w">-90,0°</td></tr>
<tr><td class="k">e</td><td class="v">35,50 mm</td><td class="w"></td></tr>
</table>
<!-- right buttons -->
<div class="rbtn" style="top:16px;height:117px"><svg width="118" height="118" viewBox="0 0 1458 1458" style="position:absolute;left:0;top:0"><defs><filter id="bl1" x="-20%" y="-20%" width="140%" height="140%"><feGaussianBlur stdDeviation="22"/></filter><linearGradient id="tb" x1="0" y1="0" x2="0" y2="1"><stop offset="0" stop-color="#6ea0dc"/><stop offset="1" stop-color="#4f86cf"/></linearGradient></defs><polygon points="300,470 820,790 1200,520 1110,460 800,700" fill="#6b6b6b" opacity="0.42" filter="url(#bl1)"/><polygon points="245,345 580,198 1066,372 1046,414 1138,462 838,696 745,668 250,428" fill="#6698d6"/><polygon points="380,335 590,248 1048,408 1138,462 838,696 742,668 700,500" fill="#b6baa7"/><polygon points="700,500 742,668 838,696 1138,462 1048,408 930,520 760,560" fill="#aeb2a0"/><polygon points="245,345 735,512 745,668 250,428" fill="url(#tb)"/><polygon points="245,345 580,198 612,214 385,330 738,498 735,516" fill="#6c9cd8"/><polygon points="580,198 1066,372 1046,414 960,372 600,248 560,262 592,212" fill="#5f8fd0"/><polygon points="735,512 780,470 760,560 745,668" fill="#5a8bd0"/><line x1="388" y1="338" x2="578" y2="256" stroke="#4a4a40" stroke-width="14"/><line x1="836" y1="698" x2="1136" y2="464" stroke="#27468c" stroke-width="16"/></svg><div class="t" style="top:83px">Teil</div></div>
<div class="rbtn" style="top:156px;height:117px"><svg width="118" height="118" viewBox="0 0 1458 1458" style="position:absolute;left:0;top:0"><defs><filter id="bl2" x="-20%" y="-20%" width="140%" height="140%"><feGaussianBlur stdDeviation="20"/></filter></defs><polygon points="350,690 620,800 900,790 1110,700 1160,560 1060,520" fill="#555" opacity="0.6" filter="url(#bl2)"/><polygon points="235,172 335,132 520,185 520,215 1065,350 1130,400 1135,528 1062,545 1052,432 345,240 255,262" fill="#cfd3d8"/><polygon points="250,262 345,240 350,300 270,300" fill="#a9aeb5"/><polygon points="345,240 1052,432 1052,470 850,470 470,385 350,330" fill="#c6cad0"/><polygon points="345,245 425,265 440,685 362,692" fill="#aeb3ba"/><polygon points="380,420 440,440 440,690 385,690" fill="#9aa0a8"/><polygon points="405,255 515,360 450,348" fill="#d88a1a"/><polygon points="455,390 482,396 482,425 455,420" fill="#d88a1a"/><polygon points="460,395 852,478 852,525 460,432" fill="#8ea8ba"/><polygon points="470,440 850,522 850,545 470,462" fill="#5f7485"/><polygon points="440,470 780,545 705,610 440,530" fill="#4b505e"/><polygon points="470,560 700,620 650,650 460,590" fill="#e9ebee"/><polygon points="380,525 620,605 612,775 380,692" fill="#cdd1d6"/><polygon points="612,625 762,592 762,732 612,775" fill="#a8adb3"/><polygon points="862,420 932,398 925,762 862,772" fill="#c4c8ce"/><polygon points="770,602 862,580 862,772 770,705" fill="#c0c5ca"/><polygon points="925,560 1062,520 1062,720 925,762" fill="#a9aeb5"/><polygon points="935,650 1040,575 1040,600 935,680" fill="#f0f1f3"/><polygon points="870,300 1000,335 1000,390 870,360" fill="#d9dce0"/><polygon points="950,420 1050,440 1050,500 950,480" fill="#e4e6e9"/><polygon points="330,125 368,135 372,152 338,150" fill="#d88a1a"/><polygon points="1050,345 1092,355 1138,525 1098,542 1075,430" fill="#d88a1a"/><polygon points="1062,400 1105,420 1112,520 1070,535" fill="#c2c6cb"/><polygon points="735,385 830,405 830,432 735,412" fill="#555b66"/></svg><div class="t" style="top:223px;top:83px">Biegen</div></div>
<div class="rbtn" style="top:1340px;height:118px"><svg width="118" height="118" viewBox="0 0 1458 1458" style="position:absolute;left:0;top:0"><defs><filter id="bl3" x="-30%" y="-30%" width="160%" height="160%"><feGaussianBlur stdDeviation="20"/></filter><radialGradient id="gg" cx="0.42" cy="0.4" r="0.65"><stop offset="0" stop-color="#b9b9b9"/><stop offset="0.45" stop-color="#a4a4a4"/><stop offset="0.8" stop-color="#d9d9d9"/><stop offset="1" stop-color="#9a9a9a"/></radialGradient></defs><path d="M722.9,527.6 L757.0,537.3 L753.2,574.8 L717.9,577.6 L702.8,617.6 L727.4,643.0 L705.4,673.6 L673.5,658.3 L640.3,685.4 L649.0,719.8 L614.6,735.2 L594.6,706.0 L552.4,712.9 L542.7,747.0 L505.2,743.2 L502.4,707.9 L462.4,692.8 L437.0,717.4 L406.4,695.4 L421.7,663.5 L394.6,630.3 L360.2,639.0 L344.8,604.6 L374.0,584.6 L367.1,542.4 L333.0,532.7 L336.8,495.2 L372.1,492.4 L387.2,452.4 L362.6,427.0 L384.6,396.4 L416.5,411.7 L449.7,384.6 L441.0,350.2 L475.4,334.8 L495.4,364.0 L537.6,357.1 L547.3,323.0 L584.8,326.8 L587.6,362.1 L627.6,377.2 L653.0,352.6 L683.6,374.6 L668.3,406.5 L695.4,439.7 L729.8,431.0 L745.2,465.4 L716.0,485.4Z" transform="translate(38,48)" fill="#444" opacity="0.55" filter="url(#bl3)"/><path d="M1078.9,457.5 L1108.5,475.1 L1095.6,509.4 L1061.7,503.2 L1037.5,537.0 L1054.3,567.0 L1026.0,590.2 L999.8,567.9 L962.0,585.1 L961.5,619.5 L925.4,625.4 L913.8,593.0 L872.5,588.9 L854.9,618.5 L820.6,605.6 L826.8,571.7 L793.0,547.5 L763.0,564.3 L739.8,536.0 L762.1,509.8 L744.9,472.0 L710.5,471.5 L704.6,435.4 L737.0,423.8 L741.1,382.5 L711.5,364.9 L724.4,330.6 L758.3,336.8 L782.5,303.0 L765.7,273.0 L794.0,249.8 L820.2,272.1 L858.0,254.9 L858.5,220.5 L894.6,214.6 L906.2,247.0 L947.5,251.1 L965.1,221.5 L999.4,234.4 L993.2,268.3 L1027.0,292.5 L1057.0,275.7 L1080.2,304.0 L1057.9,330.2 L1075.1,368.0 L1109.5,368.5 L1115.4,404.6 L1083.0,416.2Z" transform="translate(38,48)" fill="#444" opacity="0.55" filter="url(#bl3)"/><path d="M722.9,527.6 L757.0,537.3 L753.2,574.8 L717.9,577.6 L702.8,617.6 L727.4,643.0 L705.4,673.6 L673.5,658.3 L640.3,685.4 L649.0,719.8 L614.6,735.2 L594.6,706.0 L552.4,712.9 L542.7,747.0 L505.2,743.2 L502.4,707.9 L462.4,692.8 L437.0,717.4 L406.4,695.4 L421.7,663.5 L394.6,630.3 L360.2,639.0 L344.8,604.6 L374.0,584.6 L367.1,542.4 L333.0,532.7 L336.8,495.2 L372.1,492.4 L387.2,452.4 L362.6,427.0 L384.6,396.4 L416.5,411.7 L449.7,384.6 L441.0,350.2 L475.4,334.8 L495.4,364.0 L537.6,357.1 L547.3,323.0 L584.8,326.8 L587.6,362.1 L627.6,377.2 L653.0,352.6 L683.6,374.6 L668.3,406.5 L695.4,439.7 L729.8,431.0 L745.2,465.4 L716.0,485.4Z" fill="url(#gg)" stroke="#4d4d4d" stroke-width="11" stroke-linejoin="round"/><circle cx="545" cy="535" r="76" fill="#b4b4b4" stroke="#3f3f3f" stroke-width="13"/><path d="M1078.9,457.5 L1108.5,475.1 L1095.6,509.4 L1061.7,503.2 L1037.5,537.0 L1054.3,567.0 L1026.0,590.2 L999.8,567.9 L962.0,585.1 L961.5,619.5 L925.4,625.4 L913.8,593.0 L872.5,588.9 L854.9,618.5 L820.6,605.6 L826.8,571.7 L793.0,547.5 L763.0,564.3 L739.8,536.0 L762.1,509.8 L744.9,472.0 L710.5,471.5 L704.6,435.4 L737.0,423.8 L741.1,382.5 L711.5,364.9 L724.4,330.6 L758.3,336.8 L782.5,303.0 L765.7,273.0 L794.0,249.8 L820.2,272.1 L858.0,254.9 L858.5,220.5 L894.6,214.6 L906.2,247.0 L947.5,251.1 L965.1,221.5 L999.4,234.4 L993.2,268.3 L1027.0,292.5 L1057.0,275.7 L1080.2,304.0 L1057.9,330.2 L1075.1,368.0 L1109.5,368.5 L1115.4,404.6 L1083.0,416.2Z" fill="url(#gg)" stroke="#4d4d4d" stroke-width="11" stroke-linejoin="round"/><circle cx="910" cy="420" r="76" fill="#b4b4b4" stroke="#3f3f3f" stroke-width="13"/></svg><div class="t" style="top:84px">Einstellungen</div></div>
<div id="botline" style="position:absolute;left:0;top:1456.5px;width:2472px;height:1.5px;background:#dde1e6"></div>
</body>
</html>
